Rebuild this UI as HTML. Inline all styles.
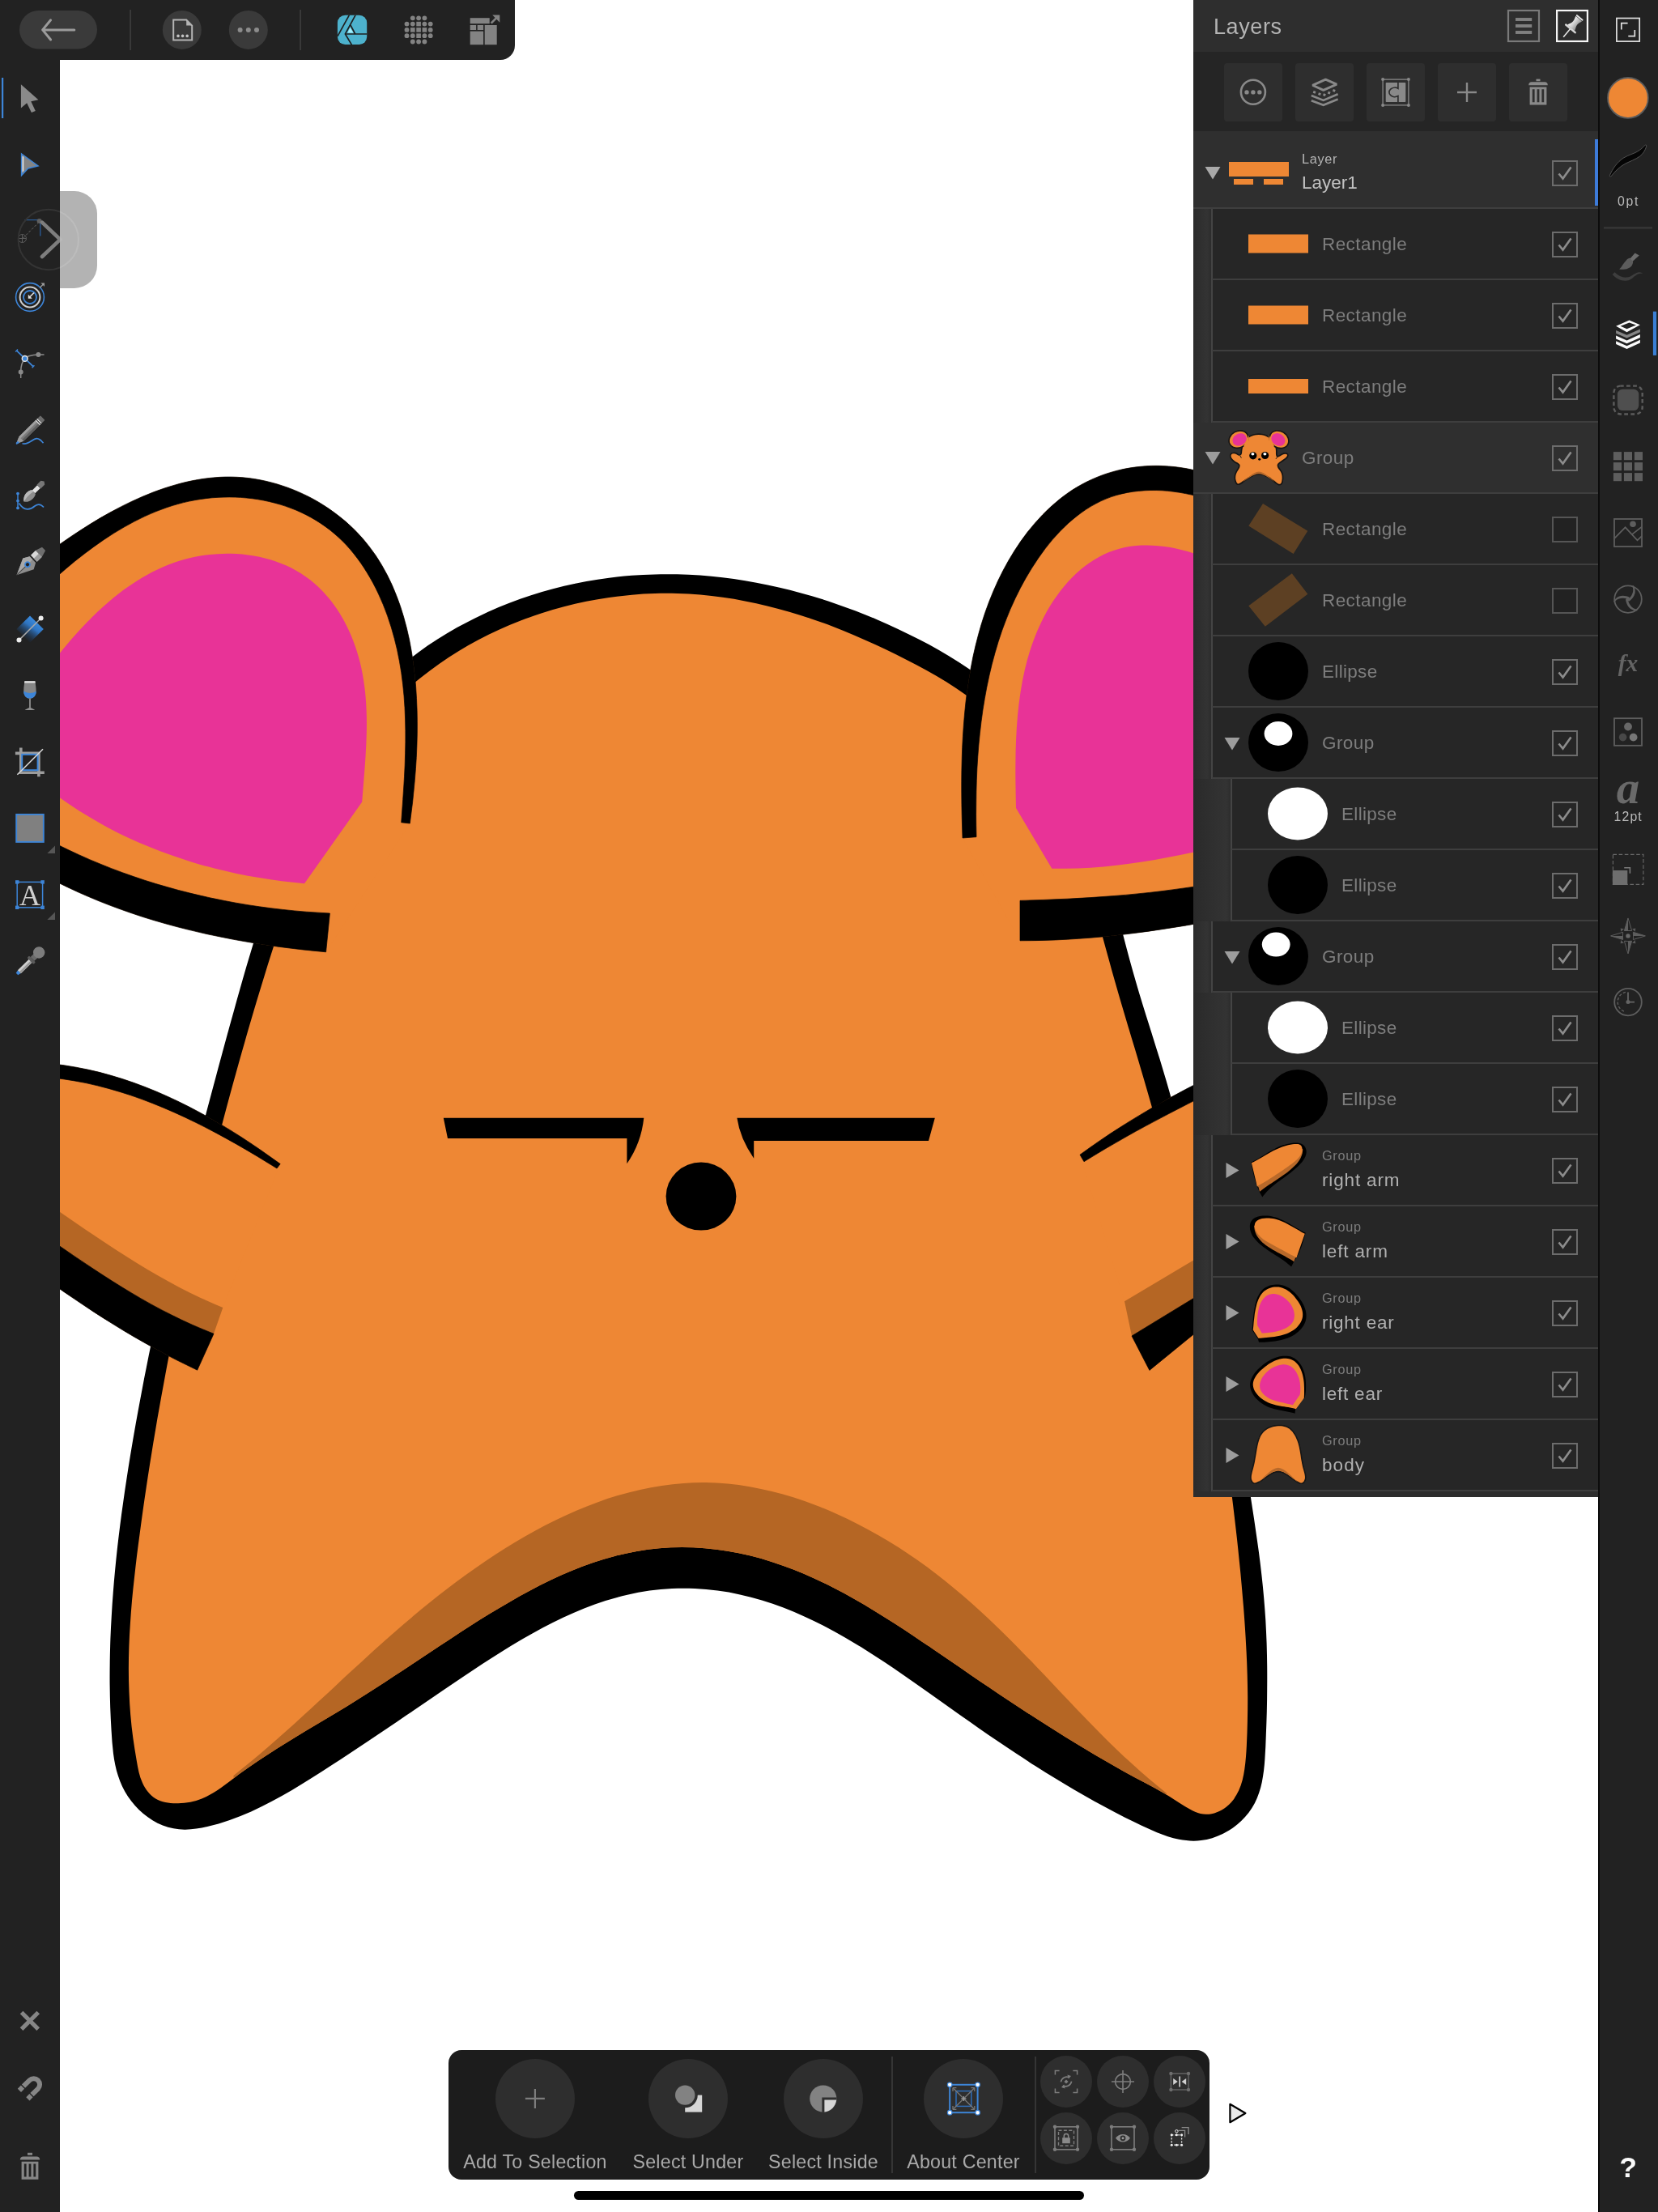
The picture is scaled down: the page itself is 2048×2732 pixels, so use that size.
<!DOCTYPE html><html><head><meta charset="utf-8"><title>Layers</title><style>
html,body{margin:0;padding:0}
body{width:2048px;height:2732px;position:relative;overflow:hidden;background:#fff;font-family:"Liberation Sans",sans-serif}
.abs{position:absolute}
svg{display:block}
.name,.sub,.blabel,.ttl,svg.txt{will-change:transform}
#topbar{left:0;top:0;width:636px;height:74px;background:#222;border-bottom-right-radius:18px}
#leftbar{left:0;top:0;width:74px;height:2732px;background:#222}
#tab{left:74px;top:236px;width:46px;height:120px;background:#b3b3b3;border-radius:0 28px 28px 0}
#rightbar{left:1974px;top:0;width:74px;height:2732px;background:#222}
#layers{left:1474px;top:0;width:500px;height:1849px;background:#2e2e2e;overflow:hidden}
#lhead{left:0;top:0;width:500px;height:64px;background:#2e2e2e}
#ltools{left:0;top:64px;width:500px;height:98px;background:#252525}
.lbtn{top:14px;width:72px;height:72px;background:#2e2e2e;border-radius:4px}
.row{left:0;width:500px;height:88px}
.sep{height:2px;background:#3e3e3e}
.cb{left:443px;width:28px;height:28px;border:2px solid #6c6c6c}
.name{font-size:22.5px;color:#7d7d7d;white-space:nowrap;letter-spacing:0.4px}
.sub{font-size:16.3px;color:#7d7d7d;white-space:nowrap;letter-spacing:0.7px}
#bottombar{left:554px;top:2532px;width:940px;height:160px;background:#1c1c1c;border-radius:16px}
.bigc{width:98px;height:98px;border-radius:49px;background:#2e2e2e;top:11px}
.smc{width:64px;height:64px;border-radius:32px;background:#2e2e2e}
.blabel{top:124.5px;font-size:23.2px;color:#a9a9a9;white-space:nowrap;text-align:center;width:240px;letter-spacing:0.24px}
#homeind{left:709px;top:2705.5px;width:630px;height:11.5px;border-radius:6px;background:#000}
</style></head><body>
<svg id="art" width="2048" height="2732" viewBox="0 0 2048 2732" style="position:absolute;left:0;top:0">
<defs><clipPath id="bodyclip"><path d="M837,733C846.3,733.2 855.7,733.8 865,734.6C874.3,735.4 883.6,736.4 892.8,737.8C902.1,739.1 911.3,740.6 920.4,742.4C929.6,744.2 938.7,746.2 947.8,748.4C956.9,750.7 966,753.1 975,755.7C984,758.4 993,761.2 1001.9,764.2C1010.9,767.2 1019.7,770.4 1028.6,773.8C1037.4,777.2 1046.2,780.7 1054.9,784.4C1063.7,788.1 1072.3,791.9 1081,795.9C1089.6,799.9 1098.2,804 1106.7,808.2C1115.2,812.4 1123.7,816.7 1132.1,821.2C1140.5,825.7 1148.8,830.3 1157,835.1C1165.1,839.8 1173.1,844.8 1181,850C1188.8,855.2 1196.5,860.6 1203.9,866.3C1211.3,871.9 1218.5,877.8 1225.4,884.1C1232.3,890.3 1238.9,896.8 1245.2,903.6C1251.5,910.5 1257.5,917.7 1263.1,925.1C1268.8,932.5 1274.2,940.2 1279.3,948C1284.4,955.9 1289.2,964 1293.8,972.3C1298.4,980.6 1302.7,989 1306.8,997.5C1310.9,1006 1314.8,1014.7 1318.4,1023.4C1322.1,1032.1 1325.5,1040.9 1328.8,1049.8C1332.1,1058.6 1335.2,1067.6 1338.1,1076.5C1341.1,1085.5 1343.9,1094.5 1346.7,1103.5C1349.4,1112.5 1352,1121.6 1354.6,1130.7C1357.2,1139.8 1359.7,1148.9 1362.2,1158C1364.7,1167.1 1367.2,1176.2 1369.7,1185.2C1372.2,1194.3 1374.7,1203.4 1377.3,1212.4C1379.8,1221.5 1382.5,1230.5 1385.1,1239.5C1387.8,1248.4 1390.4,1257.4 1393.1,1266.4C1395.8,1275.4 1398.5,1284.3 1401.2,1293.3C1403.9,1302.3 1406.6,1311.2 1409.2,1320.2C1411.9,1329.2 1414.5,1338.2 1417.1,1347.2C1419.7,1356.2 1422.3,1365.3 1424.8,1374.3C1427.3,1383.4 1429.8,1392.5 1432.2,1401.6C1434.7,1410.7 1437.1,1419.8 1439.5,1428.9C1441.9,1438 1444.3,1447.1 1446.6,1456.3C1448.9,1465.4 1451.2,1474.6 1453.4,1483.8C1455.7,1492.9 1457.9,1502.1 1460.1,1511.3C1462.2,1520.5 1464.4,1529.7 1466.5,1539C1468.6,1548.2 1470.6,1557.4 1472.7,1566.6C1474.7,1575.9 1476.7,1585.1 1478.6,1594.4C1480.6,1603.6 1482.5,1612.9 1484.3,1622.2C1486.2,1631.4 1488,1640.7 1489.8,1650C1491.6,1659.3 1493.4,1668.6 1495.1,1677.9C1496.8,1687.1 1498.5,1696.4 1500.1,1705.7C1501.7,1715 1503.3,1724.3 1504.9,1733.7C1506.4,1743 1507.9,1752.3 1509.4,1761.6C1510.8,1770.9 1512.2,1780.2 1513.6,1789.5C1515,1798.8 1516.3,1808.1 1517.6,1817.4C1518.9,1826.7 1520.1,1836 1521.4,1845.3C1522.6,1854.6 1523.7,1863.9 1524.8,1873.2C1525.9,1882.5 1527,1891.8 1528,1901.1C1529,1910.4 1530,1919.7 1530.9,1929C1531.9,1938.2 1532.8,1947.5 1533.6,1956.8C1534.4,1966 1535.2,1975.3 1536,1984.6C1536.7,1993.8 1537.4,2003.1 1538,2012.3C1538.6,2021.6 1539.1,2030.9 1539.6,2040.3C1540.1,2049.6 1540.4,2059 1540.7,2068.4C1541,2077.9 1541.1,2087.4 1541.2,2096.9C1541.2,2106.5 1541.1,2116.2 1540.9,2125.8C1540.7,2135.7 1540.4,2145.6 1539.9,2155.4C1539.4,2165.3 1538.8,2175.1 1537.3,2184.9C1536,2194.1 1533.9,2203.2 1530.1,2211.6C1526.6,2219.3 1521.5,2226.3 1514.7,2231.7C1507.5,2237.3 1498.4,2241 1489.6,2240.8C1480.5,2240.5 1471.7,2235.8 1463.6,2230.9C1455,2225.7 1447,2220.2 1438.6,2215.2C1430.5,2210.4 1422,2206 1413.6,2201.6C1405.3,2197.2 1397,2192.7 1388.8,2188.2C1380.6,2183.6 1372.5,2179 1364.4,2174.3C1356.3,2169.7 1348.2,2164.9 1340.2,2160.1C1332.2,2155.3 1324.2,2150.4 1316.3,2145.5C1308.4,2140.6 1300.5,2135.6 1292.6,2130.6C1284.7,2125.6 1276.8,2120.5 1269,2115.4C1261.2,2110.3 1253.3,2105.1 1245.5,2099.9C1237.7,2094.7 1229.9,2089.5 1222.1,2084.2C1214.3,2079 1206.5,2073.7 1198.7,2068.4C1190.9,2063 1183,2057.7 1175.2,2052.3C1167.4,2047 1159.5,2041.6 1151.7,2036.2C1143.8,2030.8 1135.9,2025.5 1128,2020.2C1120,2014.9 1112.1,2009.7 1104,2004.5C1096,1999.4 1088,1994.3 1079.9,1989.4C1071.8,1984.4 1063.6,1979.6 1055.4,1975C1047.2,1970.3 1038.9,1965.8 1030.5,1961.5C1022.2,1957.2 1013.7,1953.1 1005.2,1949.2C996.7,1945.3 988.1,1941.6 979.4,1938.2C970.8,1934.8 962,1931.7 953.1,1928.9C944.3,1926 935.3,1923.5 926.2,1921.3C917.1,1919.1 908,1917.2 898.7,1915.7C889.4,1914.2 880.1,1913 870.7,1912.2C861.3,1911.5 851.9,1911.1 842.4,1911.1C833,1911.1 823.6,1911.5 814.3,1912.3C805,1913.1 795.7,1914.3 786.5,1916C777.4,1917.6 768.3,1919.6 759.3,1922C750.3,1924.4 741.3,1927.1 732.5,1930.1C723.6,1933.2 714.8,1936.5 706.1,1940.1C697.4,1943.7 688.8,1947.6 680.2,1951.6C671.6,1955.7 663.2,1960 654.7,1964.5C646.3,1968.9 637.9,1973.6 629.7,1978.4C621.4,1983.1 613.1,1988.1 605,1993.1C596.8,1998.1 588.7,2003.2 580.7,2008.3C572.6,2013.5 564.7,2018.6 556.7,2023.9C548.8,2029 541,2034.2 533.1,2039.5C525.3,2044.6 517.5,2049.8 509.8,2054.9C502,2060 494.3,2065.2 486.5,2070.2C478.8,2075.3 471,2080.4 463.2,2085.4C455.4,2090.4 447.5,2095.4 439.6,2100.4C431.7,2105.4 423.7,2110.3 415.6,2115.2C407.5,2120.1 399.4,2125 391.2,2129.8C383.1,2134.7 374.9,2139.6 366.7,2144.6C358.6,2149.5 350.5,2154.5 342.4,2159.6C334.4,2164.6 326.5,2169.8 318.6,2175C310.8,2180.2 303.1,2185.6 295.6,2191.1C288.2,2196.7 281,2202.4 273.4,2207.8C265.8,2213.1 257.9,2218.1 249.3,2221.5C240.2,2225.2 230.3,2227 220.1,2227.3C210.4,2227.6 200.3,2226.4 192.2,2221.6C185.1,2217.2 179.5,2209.9 176,2202.1C172,2193.4 170.4,2184 168.8,2174.7C167.2,2165.2 165.6,2155.8 164.3,2146.3C163,2136.9 162,2127.4 161.2,2117.9C160.4,2108.5 159.8,2099.1 159.5,2089.6C159.1,2080.2 158.9,2070.8 158.9,2061.4C158.9,2052 159.1,2042.6 159.4,2033.2C159.8,2023.9 160.2,2014.5 160.9,2005.1C161.5,1995.7 162.2,1986.4 163,1977C163.9,1967.6 164.8,1958.3 165.9,1948.9C166.9,1939.6 168,1930.2 169.1,1920.9C170.3,1911.6 171.5,1902.2 172.8,1892.9C174,1883.6 175.3,1874.2 176.6,1864.9C177.9,1855.6 179.3,1846.3 180.7,1836.9C182.1,1827.6 183.5,1818.3 185,1809C186.5,1799.7 188,1790.4 189.5,1781.1C191.1,1771.8 192.6,1762.5 194.2,1753.2C195.9,1743.9 197.5,1734.6 199.2,1725.3C200.9,1716.1 202.6,1706.8 204.3,1697.5C206,1688.3 207.8,1679 209.6,1669.8C211.4,1660.5 213.3,1651.2 215.2,1642C217,1632.8 218.9,1623.5 220.9,1614.3C222.8,1605.1 224.8,1595.9 226.8,1586.7C228.8,1577.4 230.8,1568.2 232.8,1559C234.9,1549.8 237,1540.7 239.1,1531.5C241.2,1522.3 243.3,1513.1 245.5,1504C247.7,1494.8 249.9,1485.7 252.1,1476.5C254.3,1467.4 256.6,1458.2 258.8,1449.1C261.1,1440 263.4,1430.9 265.8,1421.8C268.1,1412.7 270.4,1403.6 272.8,1394.5C275.2,1385.4 277.6,1376.3 280,1367.3C282.5,1358.2 284.9,1349.1 287.4,1340.1C289.9,1331.1 292.4,1322 294.9,1313C297.4,1304 300,1295 302.6,1286C305.1,1277 307.7,1268 310.4,1259C313,1250 315.7,1241.1 318.4,1232.1C321.1,1223.1 323.8,1214.2 326.6,1205.2C329.3,1196.2 332.1,1187.3 335,1178.3C337.8,1169.4 340.7,1160.4 343.6,1151.5C346.5,1142.5 349.5,1133.6 352.5,1124.6C355.5,1115.6 358.6,1106.7 361.7,1097.7C364.8,1088.8 367.9,1079.8 371.1,1070.8C374.4,1061.8 377.6,1052.9 381,1043.9C384.3,1035 387.8,1026.1 391.4,1017.2C394.9,1008.4 398.7,999.7 402.6,991C406.5,982.4 410.6,973.8 414.9,965.4C419.2,957.1 423.7,948.8 428.5,940.8C433.3,932.7 438.4,924.9 443.8,917.3C449.1,909.7 454.8,902.3 460.7,895.1C466.6,887.9 472.8,880.9 479.2,874.2C485.6,867.4 492.3,860.9 499.1,854.6C506,848.4 513.1,842.3 520.4,836.5C527.7,830.6 535.2,825 542.8,819.7C550.5,814.3 558.4,809.2 566.4,804.3C574.4,799.4 582.6,794.7 590.9,790.3C599.3,785.9 607.8,781.7 616.4,777.8C625,773.9 633.7,770.2 642.5,766.8C651.4,763.4 660.3,760.2 669.3,757.3C678.3,754.4 687.5,751.7 696.6,749.3C705.8,746.9 715.1,744.7 724.3,742.8C733.6,741 743,739.3 752.4,738C761.7,736.6 771.1,735.5 780.5,734.7C789.9,733.8 799.3,733.3 808.8,733C818.2,732.7 827.6,732.7 837,733Z"/></clipPath></defs>
<path d="M836.5,709.3C845.8,709.5 855.2,709.9 864.6,710.6C873.9,711.3 883.3,712.2 892.6,713.3C901.9,714.4 911.2,715.7 920.5,717.2C929.8,718.7 939,720.4 948.2,722.4C957.4,724.3 966.6,726.4 975.8,728.7C984.9,731.1 994,733.6 1003.1,736.3C1012.2,738.9 1021.2,741.8 1030.2,744.9C1039.1,747.9 1048,751.2 1056.9,754.5C1065.8,757.9 1074.6,761.5 1083.3,765.2C1092,769 1100.7,772.8 1109.3,776.9C1117.9,780.9 1126.5,785.1 1134.9,789.5C1143.3,793.8 1151.7,798.3 1159.9,803C1168.1,807.7 1176.2,812.6 1184.2,817.7C1192.1,822.8 1199.9,828.1 1207.5,833.6C1215,839.1 1222.4,844.9 1229.6,850.9C1236.8,856.9 1243.7,863.1 1250.4,869.6C1257.1,876.1 1263.6,882.9 1269.8,889.8C1276,896.8 1281.9,904.1 1287.6,911.5C1293.3,918.9 1298.7,926.6 1303.9,934.4C1309,942.2 1313.9,950.2 1318.6,958.4C1323.2,966.6 1327.5,974.9 1331.6,983.3C1335.7,991.8 1339.5,1000.4 1343.1,1009C1346.6,1017.7 1350,1026.5 1353.1,1035.4C1356.2,1044.3 1359.2,1053.2 1362,1062.2C1364.8,1071.3 1367.4,1080.4 1370,1089.5C1372.6,1098.6 1375,1107.8 1377.4,1117C1379.9,1126.1 1382.2,1135.3 1384.6,1144.6C1387,1153.7 1389.4,1162.9 1391.8,1172.1C1394.2,1181.3 1396.7,1190.4 1399.3,1199.6C1401.8,1208.7 1404.5,1217.7 1407.2,1226.8C1409.9,1235.8 1412.7,1244.8 1415.5,1253.8C1418.3,1262.7 1421.2,1271.7 1424,1280.7C1426.8,1289.6 1429.6,1298.6 1432.4,1307.6C1435.1,1316.6 1437.8,1325.6 1440.5,1334.6C1443.1,1343.6 1445.7,1352.6 1448.2,1361.7C1450.8,1370.7 1453.2,1379.8 1455.7,1388.9C1458.1,1398 1460.4,1407.1 1462.8,1416.2C1465.1,1425.3 1467.3,1434.5 1469.5,1443.6C1471.8,1452.8 1473.9,1462 1476.1,1471.1C1478.2,1480.3 1480.3,1489.5 1482.3,1498.7C1484.3,1507.9 1486.3,1517.1 1488.3,1526.4C1490.2,1535.6 1492.2,1544.8 1494,1554.1C1495.9,1563.3 1497.8,1572.6 1499.6,1581.9C1501.4,1591.1 1503.2,1600.4 1504.9,1609.7C1506.7,1619 1508.4,1628.3 1510.1,1637.6C1511.8,1646.9 1513.4,1656.2 1515.1,1665.5C1516.7,1674.8 1518.3,1684.1 1519.9,1693.4C1521.5,1702.8 1523.1,1712.1 1524.6,1721.4C1526.2,1730.8 1527.7,1740.1 1529.2,1749.4C1530.7,1758.8 1532.2,1768.1 1533.7,1777.4C1535.2,1786.8 1536.7,1796.1 1538.1,1805.5C1539.6,1814.8 1541.1,1824.2 1542.5,1833.5C1544,1842.8 1545.4,1852.2 1546.8,1861.5C1548.3,1870.8 1549.7,1880.2 1551,1889.5C1552.4,1898.8 1553.7,1908.2 1555,1917.5C1556.2,1926.8 1557.4,1936.1 1558.4,1945.5C1559.5,1954.8 1560.4,1964.1 1561.2,1973.4C1562,1982.7 1562.7,1992 1563.3,2001.3C1563.8,2010.7 1564.2,2020 1564.6,2029.3C1564.9,2038.7 1565.1,2048 1565.2,2057.4C1565.3,2066.8 1565.3,2076.3 1565.2,2085.7C1565.2,2095.2 1565,2104.7 1564.8,2114.2C1564.5,2123.9 1564.2,2133.5 1563.8,2143.1C1563.5,2152.9 1563.1,2162.6 1562.4,2172.3C1561.8,2181.9 1560.7,2191.5 1558.8,2200.9C1556.9,2209.9 1554.1,2218.8 1549.9,2227C1545.6,2235.2 1539.9,2242.7 1533.2,2249C1526.5,2255.5 1518.7,2260.9 1510.3,2265C1501.9,2269.1 1492.9,2272 1483.7,2273.1C1474.6,2274.2 1465.3,2273.6 1456.3,2271.8C1447,2269.9 1438,2266.8 1429.1,2263.2C1420.1,2259.5 1411.3,2255.2 1402.5,2251C1393.8,2246.7 1385.2,2242.4 1376.6,2237.9C1368.2,2233.5 1359.8,2229 1351.4,2224.4C1343.2,2219.8 1335,2215.2 1326.9,2210.4C1318.8,2205.7 1310.7,2200.9 1302.8,2196.1C1294.8,2191.2 1286.9,2186.3 1279.1,2181.3C1271.2,2176.3 1263.4,2171.2 1255.7,2166.1C1247.9,2161 1240.2,2155.8 1232.5,2150.6C1224.8,2145.3 1217.1,2140 1209.4,2134.7C1201.7,2129.3 1194,2123.9 1186.3,2118.5C1178.6,2113 1170.8,2107.5 1163.1,2102C1155.4,2096.5 1147.6,2090.9 1139.8,2085.4C1132,2079.9 1124.1,2074.4 1116.2,2068.9C1108.3,2063.5 1100.4,2058.1 1092.4,2052.8C1084.4,2047.5 1076.4,2042.3 1068.3,2037.2C1060.2,2032.2 1052,2027.2 1043.8,2022.5C1035.6,2017.7 1027.3,2013.2 1018.9,2008.8C1010.5,2004.5 1002.1,2000.3 993.5,1996.4C985,1992.5 976.3,1988.9 967.6,1985.6C958.9,1982.2 950,1979.2 941.1,1976.5C932.2,1973.8 923.1,1971.4 914,1969.4C904.9,1967.4 895.6,1965.8 886.3,1964.6C877,1963.4 867.6,1962.5 858.2,1962.1C848.9,1961.7 839.5,1961.7 830.1,1962.1C820.8,1962.5 811.5,1963.3 802.3,1964.6C793.1,1965.9 783.9,1967.6 774.9,1969.7C765.8,1971.8 756.9,1974.3 748,1977.1C739.1,1980 730.3,1983.1 721.6,1986.6C712.9,1990.1 704.2,1993.8 695.7,1997.8C687.1,2001.8 678.6,2006.1 670.2,2010.5C661.7,2015 653.4,2019.7 645.1,2024.5C636.8,2029.3 628.6,2034.3 620.4,2039.4C612.2,2044.5 604.1,2049.7 596,2054.9C588,2060.2 580,2065.5 572,2070.9C564.1,2076.3 556.2,2081.6 548.3,2087C540.5,2092.4 532.7,2097.7 524.9,2103C517.1,2108.3 509.4,2113.6 501.6,2118.8C493.9,2124.1 486.2,2129.3 478.5,2134.5C470.8,2139.7 463.1,2144.9 455.4,2150C447.6,2155.2 439.9,2160.3 432.1,2165.4C424.3,2170.6 416.5,2175.7 408.7,2180.8C400.8,2185.9 392.8,2191 384.9,2196C376.9,2201.1 368.8,2206 360.6,2210.9C352.5,2215.7 344.2,2220.4 335.8,2224.8C327.4,2229.3 318.9,2233.5 310.2,2237.4C301.5,2241.3 292.6,2244.8 283.7,2248C274.6,2251.2 265.4,2253.9 256.1,2256.1C246.8,2258.2 237.4,2259.8 228,2259.7C218.8,2259.6 209.6,2257.9 201,2254.6C192.3,2251.2 184.2,2246.1 177,2240.1C169.7,2233.9 163.3,2226.7 158,2218.7C152.8,2210.9 148.8,2202.3 145.9,2193.3C143,2184.4 141.2,2175.2 140,2165.9C138.8,2156.5 138.1,2147 137.6,2137.6C137,2128.1 136.6,2118.6 136.2,2109.1C135.9,2099.7 135.7,2090.2 135.6,2080.8C135.5,2071.3 135.6,2061.9 135.7,2052.4C135.8,2043 136.1,2033.5 136.4,2024.1C136.8,2014.7 137.2,2005.3 137.8,1995.9C138.3,1986.4 139,1977 139.7,1967.6C140.4,1958.2 141.2,1948.9 142.1,1939.5C143,1930.1 144,1920.7 145,1911.3C146.1,1902 147.2,1892.6 148.4,1883.3C149.6,1873.9 150.8,1864.6 152.2,1855.2C153.5,1845.9 154.8,1836.6 156.3,1827.2C157.7,1817.9 159.2,1808.6 160.7,1799.3C162.2,1790 163.8,1780.7 165.4,1771.4C167,1762.1 168.7,1752.8 170.4,1743.5C172.1,1734.3 173.8,1725 175.6,1715.7C177.3,1706.5 179.1,1697.2 181,1688C182.8,1678.7 184.7,1669.5 186.6,1660.3C188.5,1651 190.4,1641.8 192.4,1632.6C194.4,1623.4 196.4,1614.2 198.4,1605C200.4,1595.8 202.5,1586.6 204.6,1577.4C206.7,1568.2 208.8,1559 210.9,1549.8C213.1,1540.6 215.2,1531.4 217.4,1522.3C219.6,1513.1 221.8,1503.9 224.1,1494.8C226.3,1485.6 228.6,1476.5 230.9,1467.3C233.2,1458.2 235.5,1449 237.8,1439.9C240.1,1430.7 242.5,1421.6 244.8,1412.5C247.2,1403.3 249.6,1394.2 252,1385.1C254.3,1376 256.8,1366.9 259.2,1357.7C261.6,1348.6 264,1339.5 266.5,1330.4C268.9,1321.3 271.4,1312.2 273.9,1303.1C276.3,1294 278.8,1284.9 281.3,1275.8C283.8,1266.7 286.3,1257.6 288.9,1248.5C291.4,1239.4 293.9,1230.3 296.5,1221.3C299.1,1212.2 301.7,1203.1 304.3,1194.1C307,1185 309.7,1176 312.4,1166.9C315.1,1157.9 317.8,1148.9 320.6,1139.9C323.4,1130.9 326.3,1121.9 329.2,1112.9C332.1,1103.9 335,1094.9 338.1,1086C341.1,1077 344.1,1068.1 347.3,1059.1C350.4,1050.2 353.6,1041.3 356.9,1032.4C360.2,1023.6 363.6,1014.7 367.1,1006C370.6,997.2 374.2,988.5 378.1,979.9C381.9,971.3 385.9,962.8 390.1,954.4C394.3,946.1 398.7,937.9 403.4,929.8C408.1,921.7 413,913.8 418.2,906.1C423.4,898.4 429,890.8 434.8,883.5C440.6,876.2 446.7,869.1 453,862.2C459.4,855.3 466,848.6 472.8,842.1C479.7,835.6 486.7,829.4 494,823.3C501.3,817.3 508.8,811.5 516.4,805.9C524.1,800.3 532,794.9 540,789.8C548,784.7 556.2,779.8 564.5,775.1C572.9,770.5 581.3,766.1 589.9,761.9C598.5,757.7 607.1,753.8 615.9,750.1C624.7,746.4 633.5,743 642.5,739.8C651.4,736.7 660.4,733.8 669.5,731.1C678.5,728.4 687.6,726 696.8,723.8C705.9,721.7 715.2,719.7 724.4,718C733.7,716.4 742.9,714.9 752.3,713.7C761.6,712.5 770.9,711.5 780.3,710.8C789.6,710.1 799,709.6 808.4,709.4C817.7,709.1 827.1,709.1 836.5,709.3Z" fill="#000"/>
<path d="M837,733C846.3,733.2 855.7,733.8 865,734.6C874.3,735.4 883.6,736.4 892.8,737.8C902.1,739.1 911.3,740.6 920.4,742.4C929.6,744.2 938.7,746.2 947.8,748.4C956.9,750.7 966,753.1 975,755.7C984,758.4 993,761.2 1001.9,764.2C1010.9,767.2 1019.7,770.4 1028.6,773.8C1037.4,777.2 1046.2,780.7 1054.9,784.4C1063.7,788.1 1072.3,791.9 1081,795.9C1089.6,799.9 1098.2,804 1106.7,808.2C1115.2,812.4 1123.7,816.7 1132.1,821.2C1140.5,825.7 1148.8,830.3 1157,835.1C1165.1,839.8 1173.1,844.8 1181,850C1188.8,855.2 1196.5,860.6 1203.9,866.3C1211.3,871.9 1218.5,877.8 1225.4,884.1C1232.3,890.3 1238.9,896.8 1245.2,903.6C1251.5,910.5 1257.5,917.7 1263.1,925.1C1268.8,932.5 1274.2,940.2 1279.3,948C1284.4,955.9 1289.2,964 1293.8,972.3C1298.4,980.6 1302.7,989 1306.8,997.5C1310.9,1006 1314.8,1014.7 1318.4,1023.4C1322.1,1032.1 1325.5,1040.9 1328.8,1049.8C1332.1,1058.6 1335.2,1067.6 1338.1,1076.5C1341.1,1085.5 1343.9,1094.5 1346.7,1103.5C1349.4,1112.5 1352,1121.6 1354.6,1130.7C1357.2,1139.8 1359.7,1148.9 1362.2,1158C1364.7,1167.1 1367.2,1176.2 1369.7,1185.2C1372.2,1194.3 1374.7,1203.4 1377.3,1212.4C1379.8,1221.5 1382.5,1230.5 1385.1,1239.5C1387.8,1248.4 1390.4,1257.4 1393.1,1266.4C1395.8,1275.4 1398.5,1284.3 1401.2,1293.3C1403.9,1302.3 1406.6,1311.2 1409.2,1320.2C1411.9,1329.2 1414.5,1338.2 1417.1,1347.2C1419.7,1356.2 1422.3,1365.3 1424.8,1374.3C1427.3,1383.4 1429.8,1392.5 1432.2,1401.6C1434.7,1410.7 1437.1,1419.8 1439.5,1428.9C1441.9,1438 1444.3,1447.1 1446.6,1456.3C1448.9,1465.4 1451.2,1474.6 1453.4,1483.8C1455.7,1492.9 1457.9,1502.1 1460.1,1511.3C1462.2,1520.5 1464.4,1529.7 1466.5,1539C1468.6,1548.2 1470.6,1557.4 1472.7,1566.6C1474.7,1575.9 1476.7,1585.1 1478.6,1594.4C1480.6,1603.6 1482.5,1612.9 1484.3,1622.2C1486.2,1631.4 1488,1640.7 1489.8,1650C1491.6,1659.3 1493.4,1668.6 1495.1,1677.9C1496.8,1687.1 1498.5,1696.4 1500.1,1705.7C1501.7,1715 1503.3,1724.3 1504.9,1733.7C1506.4,1743 1507.9,1752.3 1509.4,1761.6C1510.8,1770.9 1512.2,1780.2 1513.6,1789.5C1515,1798.8 1516.3,1808.1 1517.6,1817.4C1518.9,1826.7 1520.1,1836 1521.4,1845.3C1522.6,1854.6 1523.7,1863.9 1524.8,1873.2C1525.9,1882.5 1527,1891.8 1528,1901.1C1529,1910.4 1530,1919.7 1530.9,1929C1531.9,1938.2 1532.8,1947.5 1533.6,1956.8C1534.4,1966 1535.2,1975.3 1536,1984.6C1536.7,1993.8 1537.4,2003.1 1538,2012.3C1538.6,2021.6 1539.1,2030.9 1539.6,2040.3C1540.1,2049.6 1540.4,2059 1540.7,2068.4C1541,2077.9 1541.1,2087.4 1541.2,2096.9C1541.2,2106.5 1541.1,2116.2 1540.9,2125.8C1540.7,2135.7 1540.4,2145.6 1539.9,2155.4C1539.4,2165.3 1538.8,2175.1 1537.3,2184.9C1536,2194.1 1533.9,2203.2 1530.1,2211.6C1526.6,2219.3 1521.5,2226.3 1514.7,2231.7C1507.5,2237.3 1498.4,2241 1489.6,2240.8C1480.5,2240.5 1471.7,2235.8 1463.6,2230.9C1455,2225.7 1447,2220.2 1438.6,2215.2C1430.5,2210.4 1422,2206 1413.6,2201.6C1405.3,2197.2 1397,2192.7 1388.8,2188.2C1380.6,2183.6 1372.5,2179 1364.4,2174.3C1356.3,2169.7 1348.2,2164.9 1340.2,2160.1C1332.2,2155.3 1324.2,2150.4 1316.3,2145.5C1308.4,2140.6 1300.5,2135.6 1292.6,2130.6C1284.7,2125.6 1276.8,2120.5 1269,2115.4C1261.2,2110.3 1253.3,2105.1 1245.5,2099.9C1237.7,2094.7 1229.9,2089.5 1222.1,2084.2C1214.3,2079 1206.5,2073.7 1198.7,2068.4C1190.9,2063 1183,2057.7 1175.2,2052.3C1167.4,2047 1159.5,2041.6 1151.7,2036.2C1143.8,2030.8 1135.9,2025.5 1128,2020.2C1120,2014.9 1112.1,2009.7 1104,2004.5C1096,1999.4 1088,1994.3 1079.9,1989.4C1071.8,1984.4 1063.6,1979.6 1055.4,1975C1047.2,1970.3 1038.9,1965.8 1030.5,1961.5C1022.2,1957.2 1013.7,1953.1 1005.2,1949.2C996.7,1945.3 988.1,1941.6 979.4,1938.2C970.8,1934.8 962,1931.7 953.1,1928.9C944.3,1926 935.3,1923.5 926.2,1921.3C917.1,1919.1 908,1917.2 898.7,1915.7C889.4,1914.2 880.1,1913 870.7,1912.2C861.3,1911.5 851.9,1911.1 842.4,1911.1C833,1911.1 823.6,1911.5 814.3,1912.3C805,1913.1 795.7,1914.3 786.5,1916C777.4,1917.6 768.3,1919.6 759.3,1922C750.3,1924.4 741.3,1927.1 732.5,1930.1C723.6,1933.2 714.8,1936.5 706.1,1940.1C697.4,1943.7 688.8,1947.6 680.2,1951.6C671.6,1955.7 663.2,1960 654.7,1964.5C646.3,1968.9 637.9,1973.6 629.7,1978.4C621.4,1983.1 613.1,1988.1 605,1993.1C596.8,1998.1 588.7,2003.2 580.7,2008.3C572.6,2013.5 564.7,2018.6 556.7,2023.9C548.8,2029 541,2034.2 533.1,2039.5C525.3,2044.6 517.5,2049.8 509.8,2054.9C502,2060 494.3,2065.2 486.5,2070.2C478.8,2075.3 471,2080.4 463.2,2085.4C455.4,2090.4 447.5,2095.4 439.6,2100.4C431.7,2105.4 423.7,2110.3 415.6,2115.2C407.5,2120.1 399.4,2125 391.2,2129.8C383.1,2134.7 374.9,2139.6 366.7,2144.6C358.6,2149.5 350.5,2154.5 342.4,2159.6C334.4,2164.6 326.5,2169.8 318.6,2175C310.8,2180.2 303.1,2185.6 295.6,2191.1C288.2,2196.7 281,2202.4 273.4,2207.8C265.8,2213.1 257.9,2218.1 249.3,2221.5C240.2,2225.2 230.3,2227 220.1,2227.3C210.4,2227.6 200.3,2226.4 192.2,2221.6C185.1,2217.2 179.5,2209.9 176,2202.1C172,2193.4 170.4,2184 168.8,2174.7C167.2,2165.2 165.6,2155.8 164.3,2146.3C163,2136.9 162,2127.4 161.2,2117.9C160.4,2108.5 159.8,2099.1 159.5,2089.6C159.1,2080.2 158.9,2070.8 158.9,2061.4C158.9,2052 159.1,2042.6 159.4,2033.2C159.8,2023.9 160.2,2014.5 160.9,2005.1C161.5,1995.7 162.2,1986.4 163,1977C163.9,1967.6 164.8,1958.3 165.9,1948.9C166.9,1939.6 168,1930.2 169.1,1920.9C170.3,1911.6 171.5,1902.2 172.8,1892.9C174,1883.6 175.3,1874.2 176.6,1864.9C177.9,1855.6 179.3,1846.3 180.7,1836.9C182.1,1827.6 183.5,1818.3 185,1809C186.5,1799.7 188,1790.4 189.5,1781.1C191.1,1771.8 192.6,1762.5 194.2,1753.2C195.9,1743.9 197.5,1734.6 199.2,1725.3C200.9,1716.1 202.6,1706.8 204.3,1697.5C206,1688.3 207.8,1679 209.6,1669.8C211.4,1660.5 213.3,1651.2 215.2,1642C217,1632.8 218.9,1623.5 220.9,1614.3C222.8,1605.1 224.8,1595.9 226.8,1586.7C228.8,1577.4 230.8,1568.2 232.8,1559C234.9,1549.8 237,1540.7 239.1,1531.5C241.2,1522.3 243.3,1513.1 245.5,1504C247.7,1494.8 249.9,1485.7 252.1,1476.5C254.3,1467.4 256.6,1458.2 258.8,1449.1C261.1,1440 263.4,1430.9 265.8,1421.8C268.1,1412.7 270.4,1403.6 272.8,1394.5C275.2,1385.4 277.6,1376.3 280,1367.3C282.5,1358.2 284.9,1349.1 287.4,1340.1C289.9,1331.1 292.4,1322 294.9,1313C297.4,1304 300,1295 302.6,1286C305.1,1277 307.7,1268 310.4,1259C313,1250 315.7,1241.1 318.4,1232.1C321.1,1223.1 323.8,1214.2 326.6,1205.2C329.3,1196.2 332.1,1187.3 335,1178.3C337.8,1169.4 340.7,1160.4 343.6,1151.5C346.5,1142.5 349.5,1133.6 352.5,1124.6C355.5,1115.6 358.6,1106.7 361.7,1097.7C364.8,1088.8 367.9,1079.8 371.1,1070.8C374.4,1061.8 377.6,1052.9 381,1043.9C384.3,1035 387.8,1026.1 391.4,1017.2C394.9,1008.4 398.7,999.7 402.6,991C406.5,982.4 410.6,973.8 414.9,965.4C419.2,957.1 423.7,948.8 428.5,940.8C433.3,932.7 438.4,924.9 443.8,917.3C449.1,909.7 454.8,902.3 460.7,895.1C466.6,887.9 472.8,880.9 479.2,874.2C485.6,867.4 492.3,860.9 499.1,854.6C506,848.4 513.1,842.3 520.4,836.5C527.7,830.6 535.2,825 542.8,819.7C550.5,814.3 558.4,809.2 566.4,804.3C574.4,799.4 582.6,794.7 590.9,790.3C599.3,785.9 607.8,781.7 616.4,777.8C625,773.9 633.7,770.2 642.5,766.8C651.4,763.4 660.3,760.2 669.3,757.3C678.3,754.4 687.5,751.7 696.6,749.3C705.8,746.9 715.1,744.7 724.3,742.8C733.6,741 743,739.3 752.4,738C761.7,736.6 771.1,735.5 780.5,734.7C789.9,733.8 799.3,733.3 808.8,733C818.2,732.7 827.6,732.7 837,733Z" fill="#EE8734"/>
<path d="M288.5,2193.1C295.9,2187.1 303.3,2181.2 310.7,2175.1C317.9,2169.1 325.1,2163 332.2,2156.8C339.3,2150.7 346.3,2144.5 353.2,2138.3C360.2,2132.1 367.1,2125.9 373.9,2119.6C380.7,2113.4 387.5,2107.1 394.3,2100.8C401.1,2094.5 407.9,2088.2 414.7,2081.9C421.5,2075.6 428.2,2069.3 435,2063.1C441.8,2056.8 448.7,2050.5 455.5,2044.2C462.4,2037.9 469.4,2031.7 476.3,2025.5C483.4,2019.3 490.4,2013.1 497.5,2007C504.7,2000.8 512,1994.7 519.3,1988.6C526.7,1982.5 534.1,1976.5 541.7,1970.6C549.2,1964.7 556.8,1958.8 564.6,1953.1C572.3,1947.3 580.1,1941.7 588,1936.2C595.9,1930.7 603.9,1925.3 611.9,1920C620,1914.8 628.1,1909.7 636.3,1904.7C644.5,1899.8 652.8,1895.1 661.2,1890.5C669.5,1886 677.9,1881.6 686.4,1877.5C694.8,1873.3 703.4,1869.4 712,1865.7C720.6,1862.1 729.2,1858.6 738,1855.5C746.6,1852.3 755.4,1849.4 764.2,1846.8C773,1844.2 781.8,1841.9 790.7,1839.9C799.6,1837.9 808.5,1836.2 817.5,1834.9C826.4,1833.6 835.4,1832.6 844.5,1831.9C853.5,1831.3 862.6,1831 871.6,1831.1C880.7,1831.2 889.8,1831.7 898.9,1832.6C908,1833.5 917.2,1834.7 926.2,1836.3C935.4,1837.9 944.5,1839.8 953.5,1842C962.6,1844.2 971.6,1846.8 980.6,1849.6C989.6,1852.4 998.5,1855.6 1007.4,1859C1016.3,1862.4 1025.1,1866 1033.8,1870C1042.6,1873.9 1051.2,1878 1059.7,1882.4C1068.3,1886.8 1076.7,1891.4 1085.1,1896.2C1093.4,1901 1101.6,1906 1109.7,1911.1C1117.8,1916.3 1125.7,1921.6 1133.5,1927.1C1141.3,1932.6 1148.9,1938.2 1156.5,1944C1164,1949.8 1171.4,1955.7 1178.6,1961.7C1185.9,1967.7 1193,1973.8 1200,1980.1C1207.1,1986.3 1214,1992.6 1220.8,1999.1C1227.6,2005.5 1234.4,2012 1241,2018.5C1247.7,2025.1 1254.3,2031.7 1260.8,2038.4C1267.3,2045 1273.8,2051.7 1280.2,2058.5C1286.7,2065.2 1293.1,2072 1299.5,2078.7C1305.9,2085.5 1312.3,2092.3 1318.7,2099C1325.1,2105.8 1331.5,2112.5 1338,2119.2C1344.4,2125.9 1351,2132.6 1357.5,2139.2C1364.1,2145.9 1370.7,2152.4 1377.4,2158.9C1384.2,2165.4 1391,2171.8 1397.9,2178.1C1404.8,2184.5 1411.8,2190.7 1419,2196.8C1426.2,2202.9 1433.5,2208.9 1440.9,2214.8L1440.9,2300L288.5,2300Z" fill="#B56624" clip-path="url(#bodyclip)"/>
<path d="M402.6,1175.8C393,1174.9 383.5,1173.9 374,1172.9C364.4,1171.8 354.9,1170.7 345.3,1169.4C335.8,1168.1 326.3,1166.7 316.8,1165.2C307.3,1163.7 297.9,1162 288.4,1160.3C279,1158.5 269.6,1156.6 260.2,1154.6C250.8,1152.6 241.5,1150.4 232.1,1148.1C222.8,1145.8 213.6,1143.4 204.4,1140.8C195.1,1138.2 186,1135.5 176.8,1132.6C167.7,1129.6 158.7,1126.6 149.7,1123.3C140.7,1120.1 131.7,1116.7 122.8,1113.1C114,1109.5 105.1,1105.7 96.4,1101.8C87.7,1097.8 79,1093.7 70.5,1089.4C61.9,1085 53.3,1080.5 45,1075.8C36.5,1071 28.3,1066 20,1061L20,712C27.2,706.5 34.5,701 41.8,695.5C49.3,690 56.8,684.4 64.3,679C72,673.5 79.8,668 87.6,662.7C95.6,657.4 103.6,652.2 111.8,647.1C119.9,642.1 128.2,637.2 136.7,632.6C145.1,627.9 153.7,623.5 162.5,619.4C171.2,615.3 180.1,611.5 189.1,608C198,604.6 207.1,601.5 216.4,598.9C225.5,596.3 234.8,594.1 244.2,592.5C253.4,590.9 262.8,589.8 272.2,589.3C281.6,588.8 291,589 300.3,589.8C309.7,590.7 319,592.1 328.2,594.2C337.4,596.3 346.4,599 355.3,602.2C364.1,605.4 372.8,609.2 381.2,613.4C389.6,617.7 397.7,622.5 405.5,627.8C413.2,633 420.6,638.7 427.7,644.8C434.7,650.9 441.2,657.5 447.4,664.4C453.4,671.3 459,678.6 464.2,686.2C469.3,693.9 474,701.8 478.2,710C482.5,718.3 486.3,726.8 489.6,735.4C493.1,744.2 496.1,753.1 498.7,762.2C501.4,771.4 503.6,780.7 505.6,790C507.5,799.5 509.1,809.1 510.5,818.7C511.8,828.4 512.8,838.1 513.6,847.8C514.3,857.6 514.8,867.4 515.1,877.2C515.4,886.9 515.4,896.7 515.3,906.4C515.1,916.1 514.8,925.7 514.3,935.4C513.8,944.8 513.1,954.2 512.3,963.6C511.5,972.7 510.6,981.8 509.6,990.9C508.6,999.6 507.4,1008.3 506.3,1017Z" fill="#EE8734"/>
<path d="M402.6,1175.8C393,1174.9 383.5,1173.9 374,1172.9C364.4,1171.8 354.9,1170.7 345.3,1169.4C335.8,1168.1 326.3,1166.7 316.8,1165.2C307.3,1163.7 297.9,1162 288.4,1160.3C279,1158.5 269.6,1156.6 260.2,1154.6C250.8,1152.6 241.5,1150.4 232.1,1148.1C222.8,1145.8 213.6,1143.4 204.4,1140.8C195.1,1138.2 186,1135.5 176.8,1132.6C167.7,1129.6 158.7,1126.6 149.7,1123.3C140.7,1120.1 131.7,1116.7 122.8,1113.1C114,1109.5 105.1,1105.7 96.4,1101.8C87.7,1097.8 79,1093.7 70.5,1089.4C61.9,1085 53.3,1080.5 45,1075.8C36.5,1071 28.3,1066 20,1061L20,712C27.2,706.5 34.5,701 41.8,695.5C49.3,690 56.8,684.4 64.3,679C72,673.5 79.8,668 87.6,662.7C95.6,657.4 103.6,652.2 111.8,647.1C119.9,642.1 128.2,637.2 136.7,632.6C145.1,627.9 153.7,623.5 162.5,619.4C171.2,615.3 180.1,611.5 189.1,608C198,604.6 207.1,601.5 216.4,598.9C225.5,596.3 234.8,594.1 244.2,592.5C253.4,590.9 262.8,589.8 272.2,589.3C281.6,588.8 291,589 300.3,589.8C309.7,590.7 319,592.1 328.2,594.2C337.4,596.3 346.4,599 355.3,602.2C364.1,605.4 372.8,609.2 381.2,613.4C389.6,617.7 397.7,622.5 405.5,627.8C413.2,633 420.6,638.7 427.7,644.8C434.7,650.9 441.2,657.5 447.4,664.4C453.4,671.3 459,678.6 464.2,686.2C469.3,693.9 474,701.8 478.2,710C482.5,718.3 486.3,726.8 489.6,735.4C493.1,744.2 496.1,753.1 498.7,762.2C501.4,771.4 503.6,780.7 505.6,790C507.5,799.5 509.1,809.1 510.5,818.7C511.8,828.4 512.8,838.1 513.6,847.8C514.3,857.6 514.8,867.4 515.1,877.2C515.4,886.9 515.4,896.7 515.3,906.4C515.1,916.1 514.8,925.7 514.3,935.4C513.8,944.8 513.1,954.2 512.3,963.6C511.5,972.7 510.6,981.8 509.6,990.9C508.6,999.6 507.4,1008.3 506.3,1017L495.7,1015.8C496.4,1006.4 497.1,997.1 497.7,987.7C498.4,978.3 499,968.9 499.5,959.4C500,949.9 500.4,940.4 500.6,930.9C500.9,921.4 501,911.8 500.9,902.3C500.8,892.8 500.5,883.2 500,873.7C499.5,864.1 498.7,854.6 497.6,845.1C496.5,835.5 495.2,826 493.4,816.6C491.7,807.1 489.6,797.6 487.1,788.3C484.6,778.8 481.8,769.5 478.5,760.3C475.2,751 471.5,742 467.3,733.1C463.2,724.3 458.6,715.7 453.5,707.5C448.6,699.3 443.1,691.5 437.1,684C431.3,676.7 424.9,669.8 418,663.5C411.2,657.2 403.9,651.5 396.2,646.4C388.5,641.3 380.4,636.8 372.1,632.9C363.6,629 354.9,625.8 346.1,623.1C337.1,620.4 327.9,618.3 318.7,616.8C309.4,615.3 300,614.4 290.5,614.1C281,613.7 271.5,614 262,614.8C252.4,615.7 243,617.1 233.6,619.1C224.2,621.1 215,623.7 205.9,626.8C196.7,629.9 187.8,633.6 179,637.6C170.2,641.7 161.5,646.2 153.1,651.1C144.6,656 136.2,661.2 128.1,666.7C120,672.2 112,678 104.2,684C96.4,689.9 88.8,696.1 81.4,702.4C74,708.7 66.8,715.1 59.7,721.6C52.8,727.9 46,734.4 39.2,740.9C32.8,747.2 26.4,753.6 20,760L20,1015C28.4,1020 36.8,1024.9 45.3,1029.6C53.8,1034.4 62.4,1038.9 71.1,1043.2C79.8,1047.5 88.5,1051.7 97.4,1055.7C106.2,1059.7 115.1,1063.6 124.1,1067.2C133.1,1070.9 142.1,1074.4 151.2,1077.7C160.3,1081 169.5,1084.2 178.7,1087.2C187.9,1090.2 197.2,1093 206.5,1095.6C215.9,1098.3 225.2,1100.8 234.7,1103.1C244.1,1105.5 253.5,1107.6 263,1109.6C272.5,1111.6 282.1,1113.5 291.6,1115.2C301.2,1116.9 310.8,1118.4 320.4,1119.8C330,1121.2 339.7,1122.4 349.3,1123.4C359,1124.5 368.6,1125.4 378.3,1126.2C388,1126.9 397.7,1127.5 407.4,1128Z" fill="#000" stroke="#000" stroke-width="0.7"/>
<path d="M376,1091.3C366.7,1090.4 357.3,1089.4 348,1088.3C338.7,1087.1 329.3,1085.7 320.1,1084.1C310.8,1082.6 301.6,1080.8 292.4,1078.9C283.2,1076.9 274,1074.8 264.9,1072.5C255.8,1070.2 246.7,1067.6 237.7,1064.9C228.8,1062.2 219.8,1059.3 211,1056.1C202.2,1053 193.4,1049.7 184.7,1046.1C176.1,1042.6 167.5,1038.9 159,1034.9C150.5,1030.9 142.1,1026.8 133.9,1022.4C125.6,1018 117.5,1013.4 109.5,1008.6C101.4,1003.8 93.5,998.7 85.8,993.5C78,988.2 70.4,982.7 62.9,977C55.4,971.3 48.1,965.4 41,959.2C33.8,953 26.9,946.5 20,940L20,880C25.1,872.6 30.2,865.2 35.4,857.9C40.8,850.2 46.3,842.6 51.9,835C57.6,827.3 63.5,819.6 69.5,812.1C75.6,804.4 81.8,796.9 88.2,789.5C94.7,782.1 101.3,774.8 108.2,767.8C115.1,760.8 122.1,754 129.5,747.5C136.7,741 144.2,734.9 152,729.1C159.8,723.4 167.7,718.1 176,713.2C184.2,708.4 192.7,704 201.4,700.3C210.1,696.5 219.1,693.3 228.3,690.8C237.5,688.3 246.9,686.5 256.4,685.3C265.9,684.1 275.5,683.6 285.1,683.8C294.6,684 304.1,684.9 313.5,686.6C322.8,688.2 331.9,690.5 340.8,693.6C349.6,696.6 358.1,700.4 366.2,705C374.3,709.6 381.9,714.9 388.9,721C396,727.1 402.4,734 408.2,741.3C414.1,748.8 419.4,756.8 424,765.1C428.7,773.6 432.8,782.4 436.3,791.4C439.8,800.5 442.7,809.8 445,819.2C447.3,828.7 449,838.2 450.2,847.8C451.5,857.4 452.2,867.1 452.6,876.8C453,886.5 453,896.1 452.8,905.8C452.6,915.4 452.1,925 451.5,934.6C450.9,944.1 450.2,953.5 449.4,963C448.7,972.1 447.9,981.3 447.2,990.5Z" fill="#E83397"/>
<path d="M1260,1161.8C1269.7,1161.7 1279.4,1161.7 1289.1,1161.4C1298.8,1161.2 1308.5,1160.8 1318.2,1160.2C1327.9,1159.6 1337.6,1159 1347.2,1158.2C1356.9,1157.4 1366.6,1156.4 1376.2,1155.4C1385.9,1154.4 1395.5,1153.2 1405.1,1152C1414.7,1150.7 1424.4,1149.4 1434,1147.9C1443.6,1146.5 1453.1,1145 1462.7,1143.4C1472.3,1141.8 1481.9,1140.1 1491.4,1138.4C1500.9,1136.6 1510.5,1134.8 1520,1133L1520,597C1511,593 1502.1,588.9 1492.8,585.8C1483.7,582.6 1474.3,580.3 1464.8,578.6C1455.5,576.9 1446,575.9 1436.6,575.5C1427.2,575.1 1417.8,575.3 1408.5,576.3C1399.3,577.2 1390.2,578.7 1381.2,580.9C1372.3,583.1 1363.5,585.9 1355,589.4C1346.6,592.8 1338.4,596.9 1330.5,601.6C1322.7,606.2 1315.2,611.5 1308.1,617.2C1300.9,623 1294.1,629.3 1287.7,635.9C1281.2,642.6 1275.1,649.7 1269.3,657.1C1263.6,664.5 1258.2,672.2 1253.1,680.2C1248.1,688.2 1243.4,696.3 1239,704.7C1234.7,713 1230.7,721.5 1227,730.2C1223.3,738.8 1220,747.5 1216.9,756.4C1213.9,765.3 1211.1,774.2 1208.7,783.3C1206.2,792.4 1204,801.5 1202,810.7C1200.1,820 1198.4,829.3 1196.9,838.6C1195.4,848 1194.1,857.3 1193,866.8C1192,876.2 1191.1,885.6 1190.4,895.1C1189.7,904.5 1189.1,914 1188.7,923.4C1188.3,932.9 1188.1,942.3 1187.9,951.7C1187.8,961.1 1187.7,970.5 1187.8,979.9C1187.8,989.1 1188,998.4 1188.2,1007.6C1188.4,1016.8 1188.7,1025.9 1189,1035Z" fill="#EE8734"/>
<path d="M1260,1161.8C1269.7,1161.7 1279.4,1161.7 1289.1,1161.4C1298.8,1161.2 1308.5,1160.8 1318.2,1160.2C1327.9,1159.6 1337.6,1159 1347.2,1158.2C1356.9,1157.4 1366.6,1156.4 1376.2,1155.4C1385.9,1154.4 1395.5,1153.2 1405.1,1152C1414.7,1150.7 1424.4,1149.4 1434,1147.9C1443.6,1146.5 1453.1,1145 1462.7,1143.4C1472.3,1141.8 1481.9,1140.1 1491.4,1138.4C1500.9,1136.6 1510.5,1134.8 1520,1133L1520,597C1511,593 1502.1,588.9 1492.8,585.8C1483.7,582.6 1474.3,580.3 1464.8,578.6C1455.5,576.9 1446,575.9 1436.6,575.5C1427.2,575.1 1417.8,575.3 1408.5,576.3C1399.3,577.2 1390.2,578.7 1381.2,580.9C1372.3,583.1 1363.5,585.9 1355,589.4C1346.6,592.8 1338.4,596.9 1330.5,601.6C1322.7,606.2 1315.2,611.5 1308.1,617.2C1300.9,623 1294.1,629.3 1287.7,635.9C1281.2,642.6 1275.1,649.7 1269.3,657.1C1263.6,664.5 1258.2,672.2 1253.1,680.2C1248.1,688.2 1243.4,696.3 1239,704.7C1234.7,713 1230.7,721.5 1227,730.2C1223.3,738.8 1220,747.5 1216.9,756.4C1213.9,765.3 1211.1,774.2 1208.7,783.3C1206.2,792.4 1204,801.5 1202,810.7C1200.1,820 1198.4,829.3 1196.9,838.6C1195.4,848 1194.1,857.3 1193,866.8C1192,876.2 1191.1,885.6 1190.4,895.1C1189.7,904.5 1189.1,914 1188.7,923.4C1188.3,932.9 1188.1,942.3 1187.9,951.7C1187.8,961.1 1187.7,970.5 1187.8,979.9C1187.8,989.1 1188,998.4 1188.2,1007.6C1188.4,1016.8 1188.7,1025.9 1189,1035L1206,1033.7C1205.8,1024.4 1205.6,1015.1 1205.6,1005.8C1205.6,996.4 1205.7,986.9 1205.9,977.5C1206.1,967.9 1206.4,958.4 1206.9,948.9C1207.4,939.3 1208.1,929.7 1208.9,920.1C1209.8,910.5 1210.8,900.9 1212,891.4C1213.2,881.8 1214.6,872.2 1216.3,862.7C1217.9,853.2 1219.8,843.8 1221.9,834.4C1224,825 1226.3,815.7 1229,806.4C1231.6,797.2 1234.4,788.1 1237.6,779C1240.8,770 1244.3,761.1 1248,752.3C1251.8,743.5 1255.9,734.9 1260.3,726.4C1264.7,718 1269.5,709.6 1274.6,701.5C1279.7,693.4 1285.1,685.5 1290.9,677.8C1296.7,670.2 1302.9,662.9 1309.5,656.1C1316,649.3 1323,642.9 1330.4,637.2C1337.6,631.5 1345.3,626.4 1353.5,622.1C1361.6,617.7 1370.2,614.2 1379,611.6C1387.9,609 1397.2,607.3 1406.5,606.4C1416.1,605.4 1425.7,605.3 1435.3,605.8C1445.1,606.4 1454.8,607.7 1464.4,609.6C1474.1,611.5 1483.6,613.9 1492.9,617.1C1502.1,620.3 1511.1,624.1 1520,628L1520,1087C1510.5,1088.9 1501,1090.7 1491.4,1092.4C1481.9,1094.1 1472.3,1095.6 1462.7,1096.9C1453.1,1098.3 1443.5,1099.6 1433.9,1100.8C1424.3,1101.9 1414.7,1103 1405,1103.9C1395.4,1104.9 1385.8,1105.7 1376.1,1106.5C1366.4,1107.3 1356.8,1108 1347.1,1108.6C1337.4,1109.2 1327.8,1109.7 1318.1,1110.2C1308.4,1110.6 1298.7,1111 1289,1111.4C1279.4,1111.7 1269.7,1112 1260,1112.3Z" fill="#000" stroke="#000" stroke-width="0.7"/>
<path d="M1299.3,1072.8C1310,1072.8 1320.6,1072.8 1331.3,1072.4C1341.9,1072.1 1352.5,1071.3 1363.1,1070.4C1373.7,1069.4 1384.3,1068.2 1394.8,1066.8C1405.3,1065.4 1415.9,1063.7 1426.3,1061.9C1436.8,1060.1 1447.3,1058.1 1457.7,1056C1468.2,1053.9 1478.6,1051.7 1488.9,1049.3C1499.3,1046.9 1509.7,1044.5 1520,1042L1520,705C1511.6,700.2 1503.2,695.3 1494.4,691.2C1485.5,687.1 1476.3,683.7 1466.9,681C1457.5,678.2 1448,676.2 1438.4,674.9C1429,673.6 1419.5,673.1 1410,673.6C1400.8,674 1391.6,675.3 1382.7,677.7C1373.9,680.1 1365.4,683.5 1357.4,687.9C1349.3,692.3 1341.7,697.6 1334.7,703.6C1327.5,709.7 1320.9,716.5 1314.8,723.7C1308.6,731.1 1303,738.9 1297.9,747.1C1292.9,755.2 1288.3,763.7 1284.3,772.5C1280.3,781.1 1276.8,790.1 1273.7,799.2C1270.7,808.3 1268.1,817.5 1265.9,826.9C1263.7,836.2 1261.9,845.7 1260.5,855.3C1259,864.8 1257.9,874.5 1257,884.1C1256.1,893.7 1255.5,903.4 1255.1,913.1C1254.7,922.7 1254.4,932.3 1254.4,941.9C1254.3,951.4 1254.3,960.9 1254.5,970.3C1254.6,979.5 1254.8,988.8 1255,998Z" fill="#E83397"/>
<path d="M346.2,1437.6C338.2,1431.8 330.2,1426.1 322.1,1420.5C314,1414.9 305.8,1409.4 297.4,1404C289.1,1398.7 280.7,1393.4 272.1,1388.4C263.6,1383.3 255,1378.4 246.2,1373.7C237.5,1369 228.7,1364.5 219.8,1360.2C210.9,1355.9 201.9,1351.9 192.8,1348C183.7,1344.2 174.5,1340.6 165.2,1337.3C155.9,1334 146.6,1331 137.1,1328.3C127.7,1325.6 118.2,1323.1 108.6,1321.1C98.9,1319 89.2,1317.2 79.5,1315.8C69.7,1314.4 59.8,1313.3 50,1312.8C40,1312.2 30,1312.1 20,1312L20,1553C27.9,1558.8 35.7,1564.6 43.6,1570.4C51.5,1576.1 59.5,1581.8 67.5,1587.4C75.5,1593.1 83.5,1598.6 91.6,1604.1C99.7,1609.6 107.8,1615 116,1620.4C124.2,1625.7 132.5,1630.9 140.8,1636.1C149.1,1641.2 157.4,1646.3 165.9,1651.2C174.3,1656.1 182.8,1660.9 191.4,1665.6C200,1670.3 208.6,1674.9 217.3,1679.3C226,1683.7 234.9,1688 243.7,1692.2L264,1647.3L275.3,1615Z" fill="#EE8734"/>
<path d="M20,1312C30,1312.1 40,1312.2 50,1312.8C59.8,1313.3 69.7,1314.4 79.5,1315.8C89.2,1317.2 98.9,1319 108.6,1321.1C118.2,1323.1 127.7,1325.6 137.1,1328.3C146.6,1331 155.9,1334 165.2,1337.3C174.5,1340.6 183.7,1344.2 192.8,1348C201.9,1351.9 210.9,1355.9 219.8,1360.2C228.7,1364.5 237.5,1369 246.2,1373.7C255,1378.4 263.6,1383.3 272.1,1388.4C280.7,1393.4 289.1,1398.7 297.4,1404C305.8,1409.4 314,1414.9 322.1,1420.5C330.2,1426.1 338.2,1431.8 346.2,1437.6L342,1443C333.9,1438 325.7,1432.9 317.5,1428C309.3,1423 301,1418.2 292.6,1413.4C284.2,1408.6 275.8,1404 267.2,1399.4C258.7,1394.9 250.1,1390.4 241.5,1386.2C232.8,1381.9 224.1,1377.8 215.3,1373.9C206.5,1370 197.6,1366.2 188.6,1362.7C179.7,1359.2 170.7,1355.9 161.6,1352.8C152.5,1349.8 143.3,1346.9 134.1,1344.4C124.9,1341.9 115.6,1339.6 106.2,1337.6C96.8,1335.7 87.4,1334 77.9,1332.7C68.3,1331.4 58.8,1330.3 49.2,1329.8C39.5,1329.2 29.7,1329.1 20,1329Z" fill="#000" stroke="#000" stroke-width="0.7"/>
<path d="M20,1460C28.3,1465.6 36.5,1471.1 44.8,1476.7C53,1482.3 61.2,1488 69.4,1493.7C77.7,1499.3 85.9,1505 94.1,1510.7C102.3,1516.3 110.6,1521.9 118.9,1527.5C127.1,1533.1 135.4,1538.6 143.8,1544C152.2,1549.4 160.6,1554.8 169.1,1560C177.6,1565.2 186.1,1570.3 194.8,1575.3C203.4,1580.2 212.1,1585 221,1589.7C229.8,1594.3 238.7,1598.8 247.8,1603C256.9,1607.2 266.1,1611.1 275.3,1615L264,1647.3C255.2,1643.7 246.3,1640.2 237.6,1636.3C228.9,1632.5 220.3,1628.4 211.9,1624.1C203.4,1619.9 195,1615.5 186.7,1610.9C178.4,1606.3 170.2,1601.6 162.1,1596.7C153.9,1591.9 145.9,1586.9 137.9,1581.8C129.8,1576.7 121.9,1571.6 114,1566.3C106,1561.1 98.2,1555.8 90.3,1550.4C82.5,1545.1 74.6,1539.7 66.8,1534.3C59,1528.9 51.2,1523.5 43.4,1518.1C35.6,1512.7 27.8,1507.4 20,1502Z" fill="#B56624"/>
<path d="M20,1502C27.8,1507.4 35.6,1512.7 43.4,1518.1C51.2,1523.5 59,1528.9 66.8,1534.3C74.6,1539.7 82.5,1545.1 90.3,1550.4C98.2,1555.8 106,1561.1 114,1566.3C121.9,1571.6 129.8,1576.7 137.9,1581.8C145.9,1586.9 153.9,1591.9 162.1,1596.7C170.2,1601.6 178.4,1606.3 186.7,1610.9C195,1615.5 203.4,1619.9 211.9,1624.1C220.3,1628.4 228.9,1632.5 237.6,1636.3C246.3,1640.2 255.2,1643.7 264,1647.3L243.7,1692.2C234.9,1688 226,1683.7 217.3,1679.3C208.6,1674.9 200,1670.3 191.4,1665.6C182.8,1660.9 174.3,1656.1 165.9,1651.2C157.4,1646.3 149.1,1641.2 140.8,1636.1C132.5,1630.9 124.2,1625.7 116,1620.4C107.8,1615 99.7,1609.6 91.6,1604.1C83.5,1598.6 75.5,1593.1 67.5,1587.4C59.5,1581.8 51.5,1576.1 43.6,1570.4C35.7,1564.6 27.9,1558.8 20,1553Z" fill="#000" stroke="#000" stroke-width="0.7"/>
<path d="M1334,1426.2 L1389,1389 L1446.7,1354.7 L1520,1318 L1520,1611 L1473.8,1648.4 L1419.9,1692.4 L1398,1650 L1389,1607.2Z" fill="#EE8734"/>
<path d="M1520,1318C1510.7,1322.4 1501.5,1326.8 1492.3,1331.4C1483.1,1335.9 1473.9,1340.6 1464.8,1345.3C1455.7,1350.1 1446.7,1355 1437.8,1360C1428.8,1365 1419.9,1370.1 1411.1,1375.4C1402.3,1380.6 1393.5,1386 1384.9,1391.5C1376.2,1397 1367.6,1402.6 1359.2,1408.4C1350.7,1414.2 1342.3,1420.2 1334,1426.2L1339,1434.7C1347.4,1429.6 1355.7,1424.5 1364.1,1419.5C1372.6,1414.5 1381.1,1409.6 1389.6,1404.8C1398.1,1400 1406.7,1395.2 1415.3,1390.6C1424,1385.9 1432.6,1381.3 1441.3,1376.8C1450,1372.2 1458.7,1367.7 1467.4,1363.3C1476.2,1358.8 1484.9,1354.4 1493.7,1350.1C1502.4,1345.7 1511.2,1341.3 1520,1337Z" fill="#000" stroke="#000" stroke-width="0.7"/>
<path d="M1389,1607.2 L1473.8,1556.7 L1520,1529 L1520,1576 L1473.8,1603.8 L1398,1650Z" fill="#B56624"/>
<path d="M1398,1650 L1473.8,1603.8 L1520,1575 L1520,1611 L1473.8,1648.4 L1419.9,1692.4Z" fill="#000" stroke="#000" stroke-width="0.7"/>
<path d="M547.8,1380.8 L795.3,1380.8 Q792,1412 774.4,1437.2 L774.4,1406 L553,1406Z" fill="#000"/>
<path d="M1154.8,1380.8 L910.4,1380.8 Q914,1406 931.2,1430.7 L931.2,1409 L1147,1409Z" fill="#000"/>
<ellipse cx="866" cy="1477.6" rx="43.4" ry="42" fill="#000"/>
</svg>
<div id="tab" class="abs" style=""></div>
<div id="leftbar" class="abs" style=""><svg class="abs txt" style="left:0px;top:0px" width="74" height="2732" viewBox="0 0 74 2732"><rect x="2" y="96" width="2.2" height="50" fill="#3d85d8"/><path d="M25.9,104.3 L47.4,123.3 L38.3,125.2 L43.8,136.9 L38.9,139 L33.2,127.3 L25.9,133.4Z" fill="#8a8a8a"/><path d="M26.6,190 L47,205 L34.6,208 L26.6,216.5Z" fill="#858585" stroke="#3d85d8" stroke-width="1.5" stroke-linejoin="miter"/><path d="M27.6,192.5 L29.2,193.7 L29.2,211 L27.6,213Z" fill="#e8e8e8"/><g opacity="0.85"><path d="M30.5,271.6 H48.5 M49.8,275 V291.5" stroke="#2c63a6" stroke-width="1.4" fill="none"/><path d="M28.5,294 L47,275.5" stroke="#777" stroke-width="1" stroke-dasharray="3 2" fill="none"/><circle cx="48.6" cy="273" r="3" fill="#6b6b6b"/><circle cx="27.5" cy="294.5" r="5" fill="none" stroke="#666" stroke-width="1"/><path d="M22.5,294.5 H32.5 M27.5,289.5 V299.5" stroke="#666" stroke-width="1"/></g><circle cx="37" cy="367" r="17.4" fill="none" stroke="#3d85d8" stroke-width="1.6"/><circle cx="37" cy="367" r="12.4" fill="none" stroke="#d0d0d0" stroke-width="2"/><circle cx="37" cy="367" r="8" fill="none" stroke="#3d85d8" stroke-width="1.8"/><path d="M42,361.5 L36,367.5" stroke="#e0e0e0" stroke-width="1.6"/><path d="M34.8,363.8 V368.8 H39.8Z" fill="#e0e0e0"/><path d="M49,355.5 L54,350.5" stroke="#9a9a9a" stroke-width="1.4"/><path d="M50.4,349.4 H55 V354Z" fill="#9a9a9a"/><path d="M54.5,438 H47.5 C38,438 31.5,441 30.7,443 C27,447 25.7,452 25.7,459.5 V467" fill="none" stroke="#8a8a8a" stroke-width="1.5"/><circle cx="47.4" cy="438" r="3" fill="#8a8a8a"/><circle cx="25.7" cy="459.4" r="3" fill="#8a8a8a"/><path d="M20.6,433.2 L41,452.6" stroke="#3d85d8" stroke-width="1.8"/><path d="M19.2,434.6 L22,431.6 M39.6,454.2 L42.4,451.2" stroke="#3d85d8" stroke-width="1.5"/><circle cx="30.7" cy="442.9" r="3.4" fill="#3d85d8" stroke="#e6e6e6" stroke-width="1.5"/><g transform="translate(19.9,548.3) rotate(-44.5)"><path d="M0,0 L9,-4 H37 V4 H9Z" fill="#7c7c7c"/><path d="M9,-4 H37 V-1.2 H9Z" fill="#a0a0a0"/><path d="M9,1.4 H37 V4 H9Z" fill="#5e5e5e"/><path d="M0,0 L9,-4 V4Z" fill="#9a9a9a"/><path d="M0,0 L3.4,-1.5 V1.5Z" fill="#3d85d8"/><rect x="37" y="-4" width="1.5" height="8" fill="#e4e4e4"/><rect x="39.3" y="-4" width="1.5" height="8" fill="#e4e4e4"/><rect x="38.5" y="-4" width="0.8" height="8" fill="#555"/><rect x="40.8" y="-4" width="5.2" height="8" rx="1" fill="#6c6c6c"/></g><path d="M20,548 L23.5,546.2" stroke="#3d85d8" stroke-width="2"/><path d="M27.5,547.8 C36,550 40,541.5 45.5,541.7 C49.5,542 51.5,545 53.5,547.2" fill="none" stroke="#3d85d8" stroke-width="1.7"/><path d="M22,609 V628" stroke="#3d85d8" stroke-width="1.5"/><circle cx="22" cy="609.6" r="1.9" fill="#3d85d8"/><circle cx="22" cy="618.6" r="1.9" fill="#3d85d8"/><circle cx="22" cy="627.4" r="1.9" fill="#3d85d8"/><path d="M23.5,621.5 C30,632 38,629.5 43,625 C47.5,621.5 51,623 54,626.5" fill="none" stroke="#3d85d8" stroke-width="1.7"/><g transform="translate(29.5,619.5) rotate(-45)"><path d="M0,0 C4,-6 12,-6.5 17,-3.4 V3.4 C12,6.5 4,6 0,0Z" fill="#8e8e8e"/><path d="M0,0 C4,-6 12,-6.5 17,-3.4 V-0.4 C10,-2 5,-1 0,0Z" fill="#b8b8b8"/><rect x="17" y="-2.6" width="9" height="5.2" fill="#e2e2e2"/><path d="M26,-3.4 H33 L35.4,0 L33,3.4 H26Z" fill="#777"/></g><g transform="translate(20.6,710.2) rotate(-44)"><path d="M0,0 L20,-9.6 L27.5,-5.4 V5.4 L20,9.6Z" fill="#8d8d8d"/><path d="M0,0 L20,-9.6 L27.5,-5.4 V0Z" fill="#a8a8a8"/><path d="M0,0 H16" stroke="#444" stroke-width="1"/><circle cx="18.6" cy="0" r="3" fill="#222" stroke="#3d85d8" stroke-width="1.7"/><path d="M29.5,-5.6 H38 V5.6 H29.5Z" fill="#d9d9d9"/><path d="M29.5,0 H38 V5.6 H29.5Z" fill="#9c9c9c"/><path d="M38,-5.6 L46.5,-3 V3 L38,5.6Z" fill="#6f6f6f"/></g><defs><linearGradient id="fg" x1="0.72" y1="0.12" x2="0.22" y2="0.8"><stop offset="0" stop-color="#3d8fe2"/><stop offset="0.4" stop-color="#2f74c0"/><stop offset="1" stop-color="#1d3552" stop-opacity="0.12"/></linearGradient></defs><path d="M37,760.5 L53.8,777 L37,793.8 L20.4,777Z" fill="url(#fg)"/><path d="M23.5,790.6 L50.6,763.5" stroke="#a8a8a8" stroke-width="1.5"/><circle cx="50.6" cy="763.5" r="3" fill="#ededed"/><circle cx="23.5" cy="790.6" r="3" fill="#ededed"/><path d="M30.4,841.2 H43.4 C44.6,850 45.2,855 43.6,858.4 C42,861.6 39.4,862.6 36.9,862.6 C34.4,862.6 31.8,861.6 30.2,858.4 C28.6,855 29.2,850 30.4,841.2Z" fill="#868686"/><path d="M30.4,841.2 H43.4 L43.7,843.6 H30.1Z" fill="#e4e4e4"/><path d="M29.3,853.5 C33,856.5 40,857 44.6,853.8 C44.8,856 44.4,857.4 43.6,858.4 C42,861.6 39.4,862.6 36.9,862.6 C34.4,862.6 31.8,861.6 30.2,858.4 C29.6,857 29.2,855.6 29.3,853.5Z" fill="#3d85d8"/><path d="M36.1,862.4 H37.9 V874 C39.6,875.2 42,876 43.2,877 H30.6 C31.8,876 34.4,875.2 36.1,874Z" fill="#8e8e8e"/><path d="M25.8,923.4 V954.2 H54.8 M18.9,930.4 H47.9 V959.2" fill="none" stroke="#9c9c9c" stroke-width="3.6"/><rect x="27.2" y="931.8" width="19.4" height="19.4" fill="none" stroke="#3d85d8" stroke-width="2"/><path d="M21.4,956.8 L53,925.2" stroke="#d8d8d8" stroke-width="1.6"/><rect x="20.2" y="1005.9" width="33.6" height="34" fill="#808080" stroke="#3d85d8" stroke-width="1.9"/><path d="M68,1044.6 V1054 H58.4Z" fill="#565656"/><rect x="21.2" y="1089.4" width="31.4" height="31.4" fill="none" stroke="#3d85d8" stroke-width="1.5"/><rect x="19.0" y="1087.2" width="4.4" height="4.4" fill="#3d85d8"/><rect x="50.4" y="1087.2" width="4.4" height="4.4" fill="#3d85d8"/><rect x="19.0" y="1118.6" width="4.4" height="4.4" fill="#3d85d8"/><rect x="50.4" y="1118.6" width="4.4" height="4.4" fill="#3d85d8"/><text x="36.9" y="1118" font-family="Liberation Serif" font-size="36" fill="#cfcfcf" text-anchor="middle">A</text><path d="M68,1126.6 V1136 H58.4Z" fill="#565656"/><g transform="translate(21,1203) rotate(-44.3)"><path d="M0,-1.8 L4,-2.6 V2.6 L0,1.8Z" fill="#3d85d8"/><rect x="4" y="-2.8" width="20" height="5.6" fill="#cfcfcf"/><rect x="4" y="0" width="20" height="2.8" fill="#9a9a9a"/><rect x="23" y="-5.6" width="3.6" height="11.2" rx="1" fill="#5c5c5c"/><rect x="26.6" y="-3.4" width="6" height="6.8" fill="#6a6a6a"/><circle cx="38" cy="0" r="7.2" fill="#7d7d7d"/></g><path d="M26.6,2485.5 L47.2,2506.2 M47.2,2485.5 L26.6,2506.2" stroke="#868686" stroke-width="5.2"/><g transform="translate(40.6,2575.6) rotate(45)"><path d="M-10.4,9 V-1.5 A10.4,10.4 0 0 1 10.4,-1.5 V9 H4.4 V-1.5 A4.4,4.4 0 0 0 -4.4,-1.5 V9Z" fill="#868686"/><rect x="-10.4" y="10.4" width="6" height="5.8" fill="#868686"/><rect x="4.4" y="10.4" width="6" height="5.8" fill="#868686"/></g><rect x="34" y="2658.8" width="6" height="3" fill="#868686"/><path d="M24.8,2667.6 C24.8,2664.6 26.6,2663.4 28.6,2663.4 H45.4 C47.4,2663.4 49.2,2664.6 49.2,2667.6Z" fill="#868686"/><path d="M26.6,2669.8 H47.4 V2691.8 H26.6Z M29.8,2672.6 V2688.6 H32.6 V2672.6Z M35.6,2672.6 V2688.6 H38.4 V2672.6Z M41.4,2672.6 V2688.6 H44.2 V2672.6Z" fill="#868686" fill-rule="evenodd"/></svg></div>
<div id="topbar" class="abs" style=""><svg class="abs" style="left:0px;top:0px" width="640" height="74" viewBox="0 0 640 74"><rect x="24" y="13" width="96" height="47.5" rx="23.75" fill="#3a3a3a"/><path d="M91.8,36.9 H53.5 M62.6,24.8 L52.6,36.9 L62.6,49" fill="none" stroke="#9b9b9b" stroke-width="3" stroke-linecap="round" stroke-linejoin="round"/><rect x="160.2" y="12" width="1.8" height="50" fill="#3b3b3b"/><rect x="370.2" y="12" width="1.8" height="50" fill="#3b3b3b"/><circle cx="224.8" cy="36.9" r="24" fill="#3a3a3a"/><path d="M214.2,24.6 H230.2 L237.2,31.6 V49.4 H214.2Z" fill="none" stroke="#b4b4b4" stroke-width="2"/><path d="M230.2,24.6 L237.2,31.6 H230.2Z" fill="#b4b4b4"/><circle cx="220" cy="44.4" r="1.8" fill="#c4c4c4"/><circle cx="225.6" cy="44.4" r="1.8" fill="#c4c4c4"/><circle cx="231.2" cy="44.4" r="1.8" fill="#c4c4c4"/><circle cx="306.8" cy="36.9" r="24" fill="#3a3a3a"/><circle cx="296.6" cy="36.9" r="3" fill="#8c8c8c"/><circle cx="306.8" cy="36.9" r="3" fill="#8c8c8c"/><circle cx="317" cy="36.9" r="3" fill="#8c8c8c"/><g transform="translate(416.9,18.7)"><rect x="0" y="0" width="36.3" height="36.3" rx="9.4" fill="#4db2cd"/><clipPath id="adc"><rect x="0" y="0" width="36.3" height="36.3" rx="9.4"/></clipPath><g clip-path="url(#adc)" fill="none" stroke="#1f1f1f" stroke-width="1.7" stroke-linejoin="miter"><path d="M14.9,-0.8 L0,26.2"/><path d="M22.6,-0.8 L9.5,23.3 L18,37.4"/><path d="M9.5,23.3 H37"/><path d="M16,12.2 L21.8,23.3"/></g><path d="M15.6,15.4 L19.6,21.9 H12.5Z" fill="#a4f0fb"/></g><circle cx="509.8" cy="22.3" r="2.9" fill="#838383"/><circle cx="517.1" cy="22.3" r="2.9" fill="#838383"/><circle cx="524.4" cy="22.3" r="2.9" fill="#838383"/><circle cx="502.5" cy="29.6" r="2.9" fill="#838383"/><circle cx="509.8" cy="29.6" r="2.9" fill="#838383"/><rect x="514.3" y="26.8" width="5.6" height="5.6" fill="#838383"/><circle cx="524.4" cy="29.6" r="2.9" fill="#838383"/><circle cx="531.7" cy="29.6" r="2.9" fill="#838383"/><circle cx="502.5" cy="36.9" r="2.9" fill="#838383"/><rect x="507.0" y="34.1" width="5.6" height="5.6" fill="#838383"/><rect x="514.3" y="34.1" width="5.6" height="5.6" fill="#838383"/><rect x="521.6" y="34.1" width="5.6" height="5.6" fill="#838383"/><circle cx="531.7" cy="36.9" r="2.9" fill="#838383"/><circle cx="502.5" cy="44.2" r="2.9" fill="#838383"/><circle cx="509.8" cy="44.2" r="2.9" fill="#838383"/><rect x="514.3" y="41.4" width="5.6" height="5.6" fill="#838383"/><circle cx="524.4" cy="44.2" r="2.9" fill="#838383"/><circle cx="531.7" cy="44.2" r="2.9" fill="#838383"/><circle cx="509.8" cy="51.5" r="2.9" fill="#838383"/><circle cx="517.1" cy="51.5" r="2.9" fill="#838383"/><circle cx="524.4" cy="51.5" r="2.9" fill="#838383"/><g fill="#838383" transform="translate(580.7,18.6)"><rect x="0" y="3.6" width="24" height="7"/><rect x="0" y="12.4" width="7.4" height="6"/><rect x="9" y="12.4" width="7.4" height="6"/><rect x="0" y="20" width="16.4" height="16.6"/><rect x="18" y="12.4" width="15" height="24.2"/><path d="M26,10 L33.5,2.5" stroke="#838383" stroke-width="2.6" fill="none"/><path d="M27.5,0 H36.6 V9.1Z"/></g></svg></div>
<svg class="abs" style="left:0px;top:230px" width="140" height="140" viewBox="0 230 140 140"><clipPath id="cl1"><rect x="0" y="230" width="74" height="140"/></clipPath><clipPath id="cl2"><rect x="74" y="230" width="60" height="140"/></clipPath><circle cx="59.8" cy="296" r="37.2" fill="none" stroke="#343434" stroke-width="2" clip-path="url(#cl1)"/><circle cx="59.8" cy="296" r="37.2" fill="none" stroke="#bcbcbc" stroke-width="2" clip-path="url(#cl2)"/><path d="M52,274.6 L74.4,295.8 L52,317" fill="none" stroke="#7e7e7e" stroke-width="4.6" stroke-linecap="round" stroke-linejoin="miter" clip-path="url(#cl1)"/><path d="M52,274.6 L74.4,295.8 L52,317" fill="none" stroke="#b9b9b9" stroke-width="4.6" stroke-linecap="round" stroke-linejoin="miter" clip-path="url(#cl2)"/></svg>
<div id="layers" class="abs" style=""><div id="lhead" class="abs" style=""><div class="abs ttl" style="left:25px;top:17.5px;font-size:27px;color:#b4b4b4;letter-spacing:0.6px">Layers</div><svg class="abs" style="left:0px;top:0px" width="500" height="64" viewBox="0 0 500 64"><rect x="389" y="13" width="38" height="38" fill="none" stroke="#7a7a7a" stroke-width="2.2"/><rect x="398" y="22.05" width="20.2" height="3.9" fill="#808080"/><rect x="398" y="30.05" width="20.2" height="3.9" fill="#808080"/><rect x="398" y="38.05" width="20.2" height="3.9" fill="#808080"/><rect x="449.1" y="13" width="37.8" height="38" fill="#2c2c2c" stroke="#f6f6f6" stroke-width="2.2"/><defs><linearGradient id="ping" x1="0" y1="0" x2="1" y2="0"><stop offset="0" stop-color="#f4f4f4"/><stop offset="0.45" stop-color="#cfcfcf"/><stop offset="1" stop-color="#8e8e8e"/></linearGradient></defs><g transform="translate(465.9,35.3) rotate(40)"><rect x="-0.8" y="0" width="1.6" height="13.6" fill="#e4e4e4"/><path d="M-5.8,-1 C-5.2,-4 -3.3,-6 -3.3,-9 C-3.3,-12 -4.6,-14 -5,-16 H5 C4.6,-14 3.3,-12 3.3,-9 C3.3,-6 5.2,-4 5.8,-1Z" fill="url(#ping)"/><rect x="-8.7" y="-1.3" width="17.4" height="2.5" rx="1.2" fill="#d6d6d6"/><rect x="-5.4" y="-18.5" width="10.8" height="1.9" rx="0.9" fill="#e6e6e6"/></g></svg></div><div id="ltools" class="abs" style=""><div class="abs" style="left:38px;top:14px;width:72px;height:72px;background:#2e2e2e;border-radius:4px"></div><div class="abs" style="left:126px;top:14px;width:72px;height:72px;background:#2e2e2e;border-radius:4px"></div><div class="abs" style="left:214px;top:14px;width:72px;height:72px;background:#2e2e2e;border-radius:4px"></div><div class="abs" style="left:302px;top:14px;width:72px;height:72px;background:#2e2e2e;border-radius:4px"></div><div class="abs" style="left:390px;top:14px;width:72px;height:72px;background:#2e2e2e;border-radius:4px"></div><svg class="abs" style="left:0px;top:0px" width="500" height="98" viewBox="0 0 500 98"><circle cx="73.9" cy="49.8" r="15" fill="none" stroke="#898989" stroke-width="2.6"/><circle cx="66.0" cy="49.9" r="2.7" fill="#898989"/><circle cx="73.9" cy="49.9" r="2.7" fill="#898989"/><circle cx="81.80000000000001" cy="49.9" r="2.7" fill="#898989"/><path d="M147.3,41.3 L163.4,34.2 L177.1,40.2 L160.7,47.4Z" fill="none" stroke="#898989" stroke-width="2.9" stroke-linejoin="bevel"/><rect x="148.1" y="48.3" width="3" height="3" fill="#898989" transform="rotate(20 149.6 49.8)"/><rect x="154.4" y="50.7" width="3" height="3" fill="#898989" transform="rotate(20 155.9 52.2)"/><rect x="160.4" y="51.7" width="3" height="3" fill="#898989" transform="rotate(20 161.9 53.2)"/><rect x="166.2" y="49.2" width="3" height="3" fill="#898989" transform="rotate(20 167.7 50.7)"/><rect x="172.3" y="46.3" width="3" height="3" fill="#898989" transform="rotate(20 173.8 47.8)"/><path d="M145.8,54.1 L160.7,59.9 L178.6,52.2" fill="none" stroke="#898989" stroke-width="2.7"/><path d="M145.8,60.2 L160.7,65.7 L178.6,58.5" fill="none" stroke="#898989" stroke-width="2.7"/><rect x="234.1" y="34.1" width="31.8" height="31.8" fill="none" stroke="#898989" stroke-width="1.3"/><circle cx="234.1" cy="34.1" r="2" fill="#898989"/><circle cx="265.9" cy="34.1" r="2" fill="#898989"/><circle cx="234.1" cy="65.9" r="2" fill="#898989"/><circle cx="265.9" cy="65.9" r="2" fill="#898989"/><rect x="237.7" y="38" width="24.6" height="24.1" rx="0.8" fill="#898989"/><path d="M252.9,38 V45.2 A7,5.7 0 1 0 252.9,54.6 V62.1" fill="none" stroke="#2e2e2e" stroke-width="1.7"/><path d="M326,50 h24 M338,38 v24" stroke="#898989" stroke-width="2.4" fill="none"/><rect x="423.5" y="33.6" width="5" height="2.6" fill="#898989"/><path d="M414.2,41.2 c0,-3 1.6,-4 3.6,-4 h16.4 c2,0 3.6,1 3.6,4Z" fill="#898989"/><path d="M415.6,43.4 h20.8 v22 h-20.8Z M418.8,46.2 v16 h2.8 v-16Z M424.6,46.2 v16 h2.8 v-16Z M430.4,46.2 v16 h2.8 v-16Z" fill="#898989" fill-rule="evenodd"/></svg></div><div class="abs row" style="top:162px;height:95.5px;background:#2f2f2f"><div class="abs sep" style="left:0px;top:93.5px;width:500px"></div><svg class="abs" style="left:39px;top:9.5px" width="84" height="84" viewBox="0 0 84 84"><rect x="5" y="28" width="74" height="18" fill="#EE8734"/><rect x="11" y="49" width="24" height="7" fill="#EE8734"/><rect x="48" y="49" width="24" height="7" fill="#EE8734"/></svg><svg class="abs" style="left:0;top:0" width="80" height="94" viewBox="0 0 80 94"><path d="M14.5,44.0 h19 l-9.5,15.5Z" fill="#a9a9a9"/></svg><div class="abs sub" style="left:134px;top:24.5px;color:#b6b6b6">Layer</div><div class="abs name" style="left:134px;top:51.0px;color:#c2c2c2;letter-spacing:0.0px">Layer1</div><div class="abs cb" style="top:36.0px;"><svg width="28" height="28" viewBox="0 0 28 28"><path d="M6.5,14.5 L11.5,20.5 L21.5,6.5" fill="none" stroke="#8c8c8c" stroke-width="2.6"/></svg></div><div class="abs" style="left:495.6px;top:10px;width:4.4px;height:82px;background:#3d7bd9"></div></div><div class="abs row" style="top:257.5px;height:88px;background:#262626"><div class="abs" style="left:0;top:0;width:23px;height:88px;background:linear-gradient(90deg,#2b2b2b,#333 17px,#2b2b2b)"></div><div class="abs" style="left:22px;top:0;width:2px;height:88px;background:#444"></div><div class="abs sep" style="left:23px;top:86px;width:477px"></div><svg class="abs" style="left:63px;top:1.5px" width="84" height="84" viewBox="0 0 84 84"><rect x="5" y="30.5" width="74" height="23" fill="#EE8734"/></svg><div class="abs name" style="left:158.5px;top:31.5px;letter-spacing:0.42px">Rectangle</div><div class="abs cb" style="top:28.0px;"><svg width="28" height="28" viewBox="0 0 28 28"><path d="M6.5,14.5 L11.5,20.5 L21.5,6.5" fill="none" stroke="#8c8c8c" stroke-width="2.6"/></svg></div></div><div class="abs row" style="top:345.5px;height:88px;background:#262626"><div class="abs" style="left:0;top:0;width:23px;height:88px;background:linear-gradient(90deg,#2b2b2b,#333 17px,#2b2b2b)"></div><div class="abs" style="left:22px;top:0;width:2px;height:88px;background:#444"></div><div class="abs sep" style="left:23px;top:86px;width:477px"></div><svg class="abs" style="left:63px;top:1.5px" width="84" height="84" viewBox="0 0 84 84"><rect x="5" y="30.5" width="74" height="23" fill="#EE8734"/></svg><div class="abs name" style="left:158.5px;top:31.5px;letter-spacing:0.42px">Rectangle</div><div class="abs cb" style="top:28.0px;"><svg width="28" height="28" viewBox="0 0 28 28"><path d="M6.5,14.5 L11.5,20.5 L21.5,6.5" fill="none" stroke="#8c8c8c" stroke-width="2.6"/></svg></div></div><div class="abs row" style="top:433.5px;height:88px;background:#262626"><div class="abs" style="left:0;top:0;width:23px;height:88px;background:linear-gradient(90deg,#2b2b2b,#333 17px,#2b2b2b)"></div><div class="abs" style="left:22px;top:0;width:2px;height:88px;background:#444"></div><div class="abs sep" style="left:23px;top:86px;width:477px"></div><svg class="abs" style="left:63px;top:1.5px" width="84" height="84" viewBox="0 0 84 84"><rect x="5" y="33" width="74" height="18" fill="#EE8734"/></svg><div class="abs name" style="left:158.5px;top:31.5px;letter-spacing:0.42px">Rectangle</div><div class="abs cb" style="top:28.0px;"><svg width="28" height="28" viewBox="0 0 28 28"><path d="M6.5,14.5 L11.5,20.5 L21.5,6.5" fill="none" stroke="#8c8c8c" stroke-width="2.6"/></svg></div></div><div class="abs row" style="top:521.5px;height:88px;background:#2f2f2f"><div class="abs sep" style="left:0px;top:86px;width:500px"></div><svg class="abs" style="left:39px;top:1.5px" width="84" height="84" viewBox="0 0 84 84"><path d="M41.9,13.2C40.7,13.2 39.5,13.3 38.3,13.5C37.1,13.7 35.9,14 34.7,14.3C33.6,14.7 32.5,15.1 31.4,15.6C30.4,16.2 29.4,16.8 28.4,17.5C27.5,18.2 26.6,19 25.8,19.8C25,20.7 24.3,21.7 23.7,22.7C23,23.8 22.5,24.9 22.1,26.1C21.7,27.4 21.3,28.7 21.1,30C20.7,31.5 20.5,32.9 20.4,34.5C20.4,35.8 20.5,37.2 19.6,38.1C19.2,38.7 18.4,39 17.8,39C16.6,39.1 15.6,38 14.5,37.3C13.3,36.6 11.9,36.3 10.5,36.5C9.3,36.6 8,37 7.3,37.9C6.7,38.7 6.6,39.9 6.8,40.9C7,42.3 7.7,43.4 8.6,44.4C9.5,45.5 10.7,46.4 11.8,47.2C13,47.9 14.1,48.5 15.4,49.2C16.3,49.8 17.3,50.4 17.7,51.3C18,52.1 17.8,53.2 17.4,54.1C16.9,55.4 16.2,56.4 15.5,57.5C14.7,58.6 14,59.8 13.5,61.1C13,62.2 12.6,63.4 12.5,64.7C12.3,65.9 12.3,67.2 12.4,68.4C12.6,69.7 12.9,71 13.4,72.3C13.9,73.4 14.5,74.6 15.4,75.1C16.2,75.4 17.3,75.2 18.1,74.9C19.3,74.5 20.3,73.8 21.3,73C22.3,72.2 23.4,71.5 24.5,70.7C25.5,69.9 26.6,69.2 27.7,68.4C28.7,67.7 29.8,67 30.9,66.3C32,65.7 33.1,65.1 34.2,64.5C35.2,64 36.3,63.6 37.5,63.3C38.6,62.9 39.7,62.7 40.8,62.6C41.9,62.5 43,62.5 44.2,62.7C45.3,62.8 46.4,63.1 47.6,63.5C48.7,63.9 49.8,64.4 50.9,65C52.1,65.5 53.2,66.2 54.3,66.8C55.4,67.5 56.5,68.3 57.5,69.1C58.6,69.8 59.6,70.6 60.7,71.5C61.6,72.3 62.6,73.1 63.6,73.9C64.5,74.6 65.5,75.3 66.6,75.6C67.6,75.7 68.7,75.5 69.5,74.9C70.4,74.2 70.8,73 71,71.8C71.3,70.5 71.4,69.2 71.5,67.9C71.5,66.6 71.5,65.4 71.3,64.1C71.1,62.9 70.8,61.7 70.3,60.6C69.7,59.3 69,58.2 68.2,57.2C67.4,56.2 66.6,55.2 66,54C65.6,53.1 65.3,52.1 65.5,51.2C65.8,50.2 66.7,49.4 67.6,48.7C68.7,47.7 69.9,47 71.1,46.2C72.3,45.4 73.5,44.6 74.7,43.8C75.8,43 76.7,42.2 77.3,41C77.8,40.1 78,38.9 77.5,38.1C77,37.3 75.8,36.9 74.7,36.9C73.1,36.8 71.8,37.4 70.6,38C69.4,38.6 68.4,39.3 67,40.1C66.2,40.5 65.3,41.1 64.7,40.8C64.2,40.5 64,39.5 63.9,38.6C63.7,37.1 63.8,35.9 63.8,34.7C63.8,33.3 63.7,31.7 63.4,30.3C63.2,28.9 62.9,27.6 62.4,26.3C62,25.1 61.4,24 60.7,22.9C60,21.8 59.3,20.9 58.4,20C57.6,19.1 56.6,18.3 55.7,17.6C54.7,16.9 53.6,16.2 52.5,15.7C51.4,15.2 50.3,14.7 49.1,14.3C48,14 46.8,13.7 45.5,13.5C44.3,13.3 43.1,13.2 41.9,13.2Z" fill="#EE8734" stroke="#141414" stroke-width="1.7" stroke-linejoin="round"/><ellipse cx="17" cy="19.6" rx="12.4" ry="10.2" fill="#EE8734" stroke="#141414" stroke-width="1.6" transform="rotate(-28 17 19.6)"/><ellipse cx="67" cy="19.8" rx="12.4" ry="10.2" fill="#EE8734" stroke="#141414" stroke-width="1.6" transform="rotate(32 67 19.8)"/><path d="M24.6,29.6 L29.6,24 L30,14.4 L23,28Z M59.6,29.8 L54.4,24 L54.4,14.4 L61,28Z" fill="#EE8734"/><ellipse cx="18.1" cy="19.9" rx="9" ry="7.3" fill="#E83397" transform="rotate(-28 18.1 19.9)"/><ellipse cx="65.9" cy="19.9" rx="9" ry="7.3" fill="#E83397" transform="rotate(32 65.9 19.9)"/><path d="M18.6,39.6 L20.4,42.6 M64.8,41.4 L63,43.8" stroke="#141414" stroke-width="1" fill="none"/><path d="M22,72.6 C28,68.6 35,62.6 42,62.3 C49,62.6 56,68.6 62,72.6 C56,67 49,59.8 42,59.4 C35,59.8 28,67 22,72.6Z" fill="#B8692A"/><circle cx="34.8" cy="39.8" r="4.6" fill="#000"/><circle cx="49.6" cy="39.5" r="4.6" fill="#000"/><ellipse cx="34.4" cy="37.7" rx="2" ry="1.8" fill="#fff"/><ellipse cx="49.4" cy="37.8" rx="2" ry="1.8" fill="#fff"/><ellipse cx="42.7" cy="44.3" rx="1.5" ry="1.4" fill="#000"/></svg><svg class="abs" style="left:0;top:0" width="80" height="94" viewBox="0 0 80 94"><path d="M14.5,36.0 h19 l-9.5,15.5Z" fill="#9d9d9d"/></svg><div class="abs name" style="left:134px;top:31.5px;letter-spacing:0.44px">Group</div><div class="abs cb" style="top:28.0px;"><svg width="28" height="28" viewBox="0 0 28 28"><path d="M6.5,14.5 L11.5,20.5 L21.5,6.5" fill="none" stroke="#8c8c8c" stroke-width="2.6"/></svg></div></div><div class="abs row" style="top:609.5px;height:88px;background:#262626"><div class="abs" style="left:0;top:0;width:23px;height:88px;background:linear-gradient(90deg,#2b2b2b,#333 17px,#2b2b2b)"></div><div class="abs" style="left:22px;top:0;width:2px;height:88px;background:#444"></div><div class="abs sep" style="left:23px;top:86px;width:477px"></div><svg class="abs" style="left:63px;top:1.5px" width="84" height="84" viewBox="0 0 84 84"><path d="M23,11 L78.3,44.7 L60.6,73 L5.3,38.6Z" fill="#5d4023"/></svg><div class="abs name" style="left:158.5px;top:31.5px;letter-spacing:0.42px">Rectangle</div><div class="abs cb" style="top:28.0px;background:#222;border-color:#555"></div></div><div class="abs row" style="top:697.5px;height:88px;background:#262626"><div class="abs" style="left:0;top:0;width:23px;height:88px;background:linear-gradient(90deg,#2b2b2b,#333 17px,#2b2b2b)"></div><div class="abs" style="left:22px;top:0;width:2px;height:88px;background:#444"></div><div class="abs sep" style="left:23px;top:86px;width:477px"></div><svg class="abs" style="left:63px;top:1.5px" width="84" height="84" viewBox="0 0 84 84"><path d="M58.8,9.2 L78.3,34.7 L25.8,74.8 L5.3,49.2Z" fill="#5d4023"/></svg><div class="abs name" style="left:158.5px;top:31.5px;letter-spacing:0.42px">Rectangle</div><div class="abs cb" style="top:28.0px;background:#222;border-color:#555"></div></div><div class="abs row" style="top:785.5px;height:88px;background:#262626"><div class="abs" style="left:0;top:0;width:23px;height:88px;background:linear-gradient(90deg,#2b2b2b,#333 17px,#2b2b2b)"></div><div class="abs" style="left:22px;top:0;width:2px;height:88px;background:#444"></div><div class="abs sep" style="left:23px;top:86px;width:477px"></div><svg class="abs" style="left:63px;top:1.5px" width="84" height="84" viewBox="0 0 84 84"><ellipse cx="42" cy="42" rx="37" ry="36" fill="#000"/></svg><div class="abs name" style="left:158.5px;top:31.5px;letter-spacing:0.32px">Ellipse</div><div class="abs cb" style="top:28.0px;"><svg width="28" height="28" viewBox="0 0 28 28"><path d="M6.5,14.5 L11.5,20.5 L21.5,6.5" fill="none" stroke="#8c8c8c" stroke-width="2.6"/></svg></div></div><div class="abs row" style="top:873.5px;height:88px;background:#262626"><div class="abs" style="left:0;top:0;width:23px;height:88px;background:linear-gradient(90deg,#2b2b2b,#333 17px,#2b2b2b)"></div><div class="abs" style="left:22px;top:0;width:2px;height:88px;background:#444"></div><div class="abs sep" style="left:23px;top:86px;width:477px"></div><svg class="abs" style="left:63px;top:1.5px" width="84" height="84" viewBox="0 0 84 84"><ellipse cx="42" cy="42" rx="37" ry="36" fill="#000"/><ellipse cx="42" cy="31" rx="17.4" ry="15" fill="#fff"/></svg><svg class="abs" style="left:0;top:0" width="80" height="94" viewBox="0 0 80 94"><path d="M38.5,37.0 h19 l-9.5,15.5Z" fill="#9d9d9d"/></svg><div class="abs name" style="left:158.5px;top:31.5px;letter-spacing:0.44px">Group</div><div class="abs cb" style="top:28.0px;"><svg width="28" height="28" viewBox="0 0 28 28"><path d="M6.5,14.5 L11.5,20.5 L21.5,6.5" fill="none" stroke="#8c8c8c" stroke-width="2.6"/></svg></div></div><div class="abs row" style="top:961.5px;height:88px;background:#262626"><div class="abs" style="left:0;top:0;width:47px;height:88px;background:linear-gradient(90deg,#2b2b2b,#333 41px,#2b2b2b)"></div><div class="abs" style="left:0;top:0;width:22px;height:88px;background:linear-gradient(90deg,#2a2a2a,#2f2f2f)"></div><div class="abs" style="left:46px;top:0;width:2px;height:88px;background:#444"></div><div class="abs sep" style="left:47px;top:86px;width:453px"></div><svg class="abs" style="left:87px;top:1.5px" width="84" height="84" viewBox="0 0 84 84"><ellipse cx="42" cy="42" rx="37" ry="32.4" fill="#fff"/></svg><div class="abs name" style="left:182.5px;top:31.5px;letter-spacing:0.32px">Ellipse</div><div class="abs cb" style="top:28.0px;"><svg width="28" height="28" viewBox="0 0 28 28"><path d="M6.5,14.5 L11.5,20.5 L21.5,6.5" fill="none" stroke="#8c8c8c" stroke-width="2.6"/></svg></div></div><div class="abs row" style="top:1049.5px;height:88px;background:#262626"><div class="abs" style="left:0;top:0;width:47px;height:88px;background:linear-gradient(90deg,#2b2b2b,#333 41px,#2b2b2b)"></div><div class="abs" style="left:0;top:0;width:22px;height:88px;background:linear-gradient(90deg,#2a2a2a,#2f2f2f)"></div><div class="abs" style="left:46px;top:0;width:2px;height:88px;background:#444"></div><div class="abs sep" style="left:47px;top:86px;width:453px"></div><svg class="abs" style="left:87px;top:1.5px" width="84" height="84" viewBox="0 0 84 84"><ellipse cx="42" cy="42" rx="37" ry="36" fill="#000"/></svg><div class="abs name" style="left:182.5px;top:31.5px;letter-spacing:0.32px">Ellipse</div><div class="abs cb" style="top:28.0px;"><svg width="28" height="28" viewBox="0 0 28 28"><path d="M6.5,14.5 L11.5,20.5 L21.5,6.5" fill="none" stroke="#8c8c8c" stroke-width="2.6"/></svg></div></div><div class="abs row" style="top:1137.5px;height:88px;background:#262626"><div class="abs" style="left:0;top:0;width:23px;height:88px;background:linear-gradient(90deg,#2b2b2b,#333 17px,#2b2b2b)"></div><div class="abs" style="left:22px;top:0;width:2px;height:88px;background:#444"></div><div class="abs sep" style="left:23px;top:86px;width:477px"></div><svg class="abs" style="left:63px;top:1.5px" width="84" height="84" viewBox="0 0 84 84"><ellipse cx="42" cy="42" rx="37" ry="36" fill="#000"/><ellipse cx="39.2" cy="27.6" rx="17.4" ry="15" fill="#fff"/></svg><svg class="abs" style="left:0;top:0" width="80" height="94" viewBox="0 0 80 94"><path d="M38.5,37.0 h19 l-9.5,15.5Z" fill="#9d9d9d"/></svg><div class="abs name" style="left:158.5px;top:31.5px;letter-spacing:0.44px">Group</div><div class="abs cb" style="top:28.0px;"><svg width="28" height="28" viewBox="0 0 28 28"><path d="M6.5,14.5 L11.5,20.5 L21.5,6.5" fill="none" stroke="#8c8c8c" stroke-width="2.6"/></svg></div></div><div class="abs row" style="top:1225.5px;height:88px;background:#262626"><div class="abs" style="left:0;top:0;width:47px;height:88px;background:linear-gradient(90deg,#2b2b2b,#333 41px,#2b2b2b)"></div><div class="abs" style="left:0;top:0;width:22px;height:88px;background:linear-gradient(90deg,#2a2a2a,#2f2f2f)"></div><div class="abs" style="left:46px;top:0;width:2px;height:88px;background:#444"></div><div class="abs sep" style="left:47px;top:86px;width:453px"></div><svg class="abs" style="left:87px;top:1.5px" width="84" height="84" viewBox="0 0 84 84"><ellipse cx="42" cy="42" rx="37" ry="32.4" fill="#fff"/></svg><div class="abs name" style="left:182.5px;top:31.5px;letter-spacing:0.32px">Ellipse</div><div class="abs cb" style="top:28.0px;"><svg width="28" height="28" viewBox="0 0 28 28"><path d="M6.5,14.5 L11.5,20.5 L21.5,6.5" fill="none" stroke="#8c8c8c" stroke-width="2.6"/></svg></div></div><div class="abs row" style="top:1313.5px;height:88px;background:#262626"><div class="abs" style="left:0;top:0;width:47px;height:88px;background:linear-gradient(90deg,#2b2b2b,#333 41px,#2b2b2b)"></div><div class="abs" style="left:0;top:0;width:22px;height:88px;background:linear-gradient(90deg,#2a2a2a,#2f2f2f)"></div><div class="abs" style="left:46px;top:0;width:2px;height:88px;background:#444"></div><div class="abs sep" style="left:47px;top:86px;width:453px"></div><svg class="abs" style="left:87px;top:1.5px" width="84" height="84" viewBox="0 0 84 84"><ellipse cx="42" cy="42" rx="37" ry="36" fill="#000"/></svg><div class="abs name" style="left:182.5px;top:31.5px;letter-spacing:0.32px">Ellipse</div><div class="abs cb" style="top:28.0px;"><svg width="28" height="28" viewBox="0 0 28 28"><path d="M6.5,14.5 L11.5,20.5 L21.5,6.5" fill="none" stroke="#8c8c8c" stroke-width="2.6"/></svg></div></div><div class="abs row" style="top:1401.5px;height:88px;background:#262626"><div class="abs" style="left:0;top:0;width:23px;height:88px;background:linear-gradient(90deg,#2b2b2b,#333 17px,#2b2b2b)"></div><div class="abs" style="left:22px;top:0;width:2px;height:88px;background:#444"></div><div class="abs sep" style="left:23px;top:86px;width:477px"></div><svg class="abs" style="left:63px;top:1.5px" width="84" height="84" viewBox="0 0 84 84"><path d="M8.4,32.6C9.9,31.9 11.4,31.1 12.9,30.3C14.4,29.6 15.8,28.7 17.3,27.9C18.7,27 20.1,26.2 21.6,25.3C23,24.4 24.4,23.6 25.8,22.7C27.2,21.8 28.6,20.9 30.1,20.1C31.5,19.2 32.9,18.4 34.4,17.6C35.8,16.8 37.3,16 38.7,15.2C40.2,14.5 41.7,13.8 43.3,13.1C44.8,12.5 46.4,11.8 47.9,11.3C49.5,10.8 51.2,10.3 52.8,9.9C54.5,9.5 56.3,9.1 58,8.9C59.8,8.6 61.6,8.5 63.3,8.5C65.1,8.5 66.8,8.6 68.4,9C70,9.4 71.4,10 72.7,10.9C73.9,11.8 74.8,13 75.5,14.4C76.2,15.8 76.6,17.3 76.7,18.8C76.8,20.3 76.6,21.8 76.2,23.2C75.8,24.8 75.1,26.2 74.4,27.6C73.5,29.1 72.5,30.5 71.5,31.9C70.3,33.3 69.1,34.7 67.8,36C66.6,37.3 65.2,38.6 63.8,39.8C62.5,41 61.1,42.2 59.7,43.3C58.4,44.4 57,45.5 55.7,46.5C54.3,47.5 53,48.5 51.7,49.5C50.4,50.5 49,51.4 47.7,52.4C46.4,53.3 45.1,54.2 43.9,55.2C42.6,56.1 41.3,57 40,58C38.8,58.9 37.5,59.9 36.3,60.9C35.1,61.9 33.9,63 32.7,64.1C31.5,65.2 30.3,66.3 29.1,67.5C27.9,68.7 26.8,70 25.7,71.3C24.5,72.6 23.4,74.1 22.3,75.5L19,69.4C17.9,67 16.8,64.6 15.8,62.1C12.1,52.7 10.2,42.7 8.4,32.6Z" fill="#000"/><path d="M72.3,16.5C72.2,18.2 72,19.9 71.7,21.6C71.3,23.2 70.7,24.7 70,26.2C69.4,27.7 68.5,29.1 67.6,30.5C66.7,31.9 65.7,33.2 64.6,34.5C63.5,35.7 62.3,37 61,38.1C59.8,39.3 58.5,40.5 57.2,41.6C55.8,42.7 54.5,43.8 53.1,44.9C51.7,46 50.3,47 48.8,48C47.4,49.1 45.9,50.1 44.5,51.1C43,52.1 41.5,53 40.1,54C38.6,55 37.1,56 35.6,56.9C34.2,57.9 32.7,58.9 31.3,59.8C29.8,60.8 28.4,61.8 27,62.7C25.6,63.7 24.2,64.7 22.9,65.7C21.6,66.7 20.3,67.8 19,68.8L17.4,62.9L15.8,62.1L15.8,58C17.1,56.8 18.3,55.5 19.6,54.3C20.9,53 22.1,51.8 23.4,50.5C24.6,49.2 25.9,48 27.2,46.7C28.5,45.5 29.8,44.2 31.1,43C32.3,41.7 33.7,40.5 35,39.3C36.3,38.1 37.6,36.8 39,35.7C40.3,34.5 41.6,33.3 43,32.1C44.4,31 45.8,29.9 47.2,28.8C48.6,27.7 50,26.6 51.5,25.6C52.9,24.5 54.4,23.5 55.9,22.5C57.4,21.6 58.9,20.6 60.4,19.8C62,18.9 63.5,18 65.1,17.2C66.7,16.4 68.4,15.7 70,15Z" fill="#B8692A"/><path d="M8.9,33.2C10.5,32.4 12,31.7 13.5,30.9C15.1,30.1 16.5,29.3 18,28.4C19.5,27.6 20.9,26.8 22.4,25.9C23.8,25.1 25.2,24.2 26.6,23.4C28.1,22.6 29.5,21.8 30.9,21C32.4,20.2 33.8,19.4 35.3,18.6C36.7,17.8 38.2,17.1 39.7,16.4C41.2,15.7 42.7,15.1 44.3,14.4C45.9,13.8 47.5,13.2 49.1,12.7C50.8,12.2 52.5,11.7 54.2,11.3C56,10.9 57.8,10.6 59.6,10.3C61.4,10.1 63.2,9.9 65.1,10C66.6,10.1 68.2,10.4 69.4,11.3C70.4,12.1 71.1,13.5 71.4,14.9C71.7,16.4 71.6,18 71.2,19.5C70.9,21 70.3,22.4 69.5,23.7C68.6,25.1 67.6,26.4 66.5,27.6C65.3,28.9 64,30.1 62.6,31.3C61.2,32.5 59.8,33.6 58.3,34.7C56.8,35.8 55.3,36.8 53.8,37.9C52.3,38.9 50.9,39.9 49.4,40.9C48.1,41.9 46.7,42.9 45.3,43.8C43.9,44.7 42.6,45.7 41.2,46.6C39.9,47.5 38.6,48.4 37.2,49.2C35.9,50.1 34.6,51 33.2,51.8C31.9,52.7 30.5,53.6 29.1,54.4C27.7,55.3 26.3,56.1 24.9,57C23.4,57.8 22,58.7 20.5,59.5C18.9,60.4 17.4,61.2 15.8,62.1L15.8,62.1L8.9,33.2Z" fill="#EE8734"/></svg><svg class="abs" style="left:0;top:0" width="80" height="94" viewBox="0 0 80 94"><path d="M40.5,34.0 v19 l16,-9.5Z" fill="#9d9d9d"/></svg><div class="abs sub" style="left:158.5px;top:16.5px;color:#7d7d7d">Group</div><div class="abs name" style="left:158.5px;top:43.0px;color:#b0b0b0;letter-spacing:0.84px">right arm</div><div class="abs cb" style="top:28.0px;"><svg width="28" height="28" viewBox="0 0 28 28"><path d="M6.5,14.5 L11.5,20.5 L21.5,6.5" fill="none" stroke="#8c8c8c" stroke-width="2.6"/></svg></div></div><div class="abs row" style="top:1489.5px;height:88px;background:#262626"><div class="abs" style="left:0;top:0;width:23px;height:88px;background:linear-gradient(90deg,#2b2b2b,#333 17px,#2b2b2b)"></div><div class="abs" style="left:22px;top:0;width:2px;height:88px;background:#444"></div><div class="abs sep" style="left:23px;top:86px;width:477px"></div><svg class="abs" style="left:63px;top:1.5px" width="84" height="84" viewBox="0 0 84 84"><path d="M75.6,31.6C74.1,30.9 72.7,30.2 71.2,29.4C69.8,28.7 68.3,27.8 66.8,27C65.3,26.1 63.8,25.3 62.4,24.4C60.8,23.5 59.3,22.6 57.8,21.7C56.3,20.8 54.7,19.9 53.2,19.1C51.6,18.2 50.1,17.4 48.5,16.6C46.9,15.8 45.3,15.1 43.7,14.4C42,13.7 40.4,13.1 38.7,12.6C37.1,12.1 35.4,11.6 33.7,11.2C32,10.9 30.3,10.6 28.6,10.5C26.8,10.4 25.1,10.3 23.3,10.5C21.5,10.6 19.8,10.8 18,11.2C16.4,11.6 14.7,12.2 13.2,13C11.8,13.7 10.5,14.7 9.5,15.9C8.4,17.1 7.7,18.5 7.3,20.1C6.9,21.7 6.8,23.4 6.9,25C6.9,26.7 7.2,28.3 7.7,29.8C8.2,31.4 8.8,32.9 9.6,34.4C10.5,35.9 11.4,37.3 12.5,38.6C13.5,40 14.7,41.3 16,42.6C17.3,43.9 18.6,45.1 20,46.3C21.4,47.5 22.9,48.7 24.4,49.8C25.9,50.9 27.4,51.9 28.9,53C30.4,54 31.9,55 33.4,56C34.8,56.9 36.3,57.8 37.7,58.7C39.1,59.6 40.4,60.5 41.8,61.3C43.1,62.2 44.5,63.1 45.8,64C47.1,64.9 48.5,65.8 49.8,66.8C51.2,67.8 52.5,68.8 53.8,69.9C55.3,71 56.7,72.2 58.1,73.4L61.3,67.3C62.4,65.5 63.6,63.8 64.6,62C70,52.7 72.8,42.1 75.6,31.6Z" fill="#000"/><path d="M12.1,22.9C12.3,24.7 12.4,26.5 12.8,28.3C13.2,30 13.8,31.6 14.5,33.2C15.2,34.7 16.1,36.1 17.1,37.5C18.1,38.9 19.2,40.2 20.4,41.4C21.6,42.7 22.9,43.9 24.2,45C25.6,46.1 27,47.2 28.5,48.2C30,49.3 31.6,50.3 33.2,51.2C34.7,52.2 36.3,53.1 38,54C39.6,55 41.2,55.8 42.9,56.7C44.5,57.6 46.1,58.5 47.7,59.3C49.3,60.2 50.9,61 52.5,61.9C54,62.7 55.6,63.6 57.1,64.5C58.5,65.4 59.9,66.3 61.3,67.2L63,62.8L64.6,62L64.6,58C63,57.2 61.5,56.4 60,55.5C58.5,54.6 57,53.6 55.7,52.6C54.3,51.6 52.9,50.5 51.6,49.4C50.2,48.2 48.9,47.1 47.7,45.9C46.4,44.7 45.1,43.5 43.9,42.3C42.6,41.1 41.3,39.9 40.1,38.7C38.8,37.5 37.5,36.3 36.2,35.2C35,34 33.6,32.9 32.3,31.8C31,30.7 29.6,29.7 28.2,28.7C26.8,27.7 25.3,26.8 23.8,26C22.3,25.1 20.7,24.3 19.1,23.7C17.4,23 15.7,22.5 14,22Z" fill="#B8692A"/><path d="M74.8,32.7C73.3,31.9 71.8,31.2 70.3,30.4C68.8,29.6 67.3,28.7 65.9,27.8C64.4,27 62.9,26.1 61.4,25.2C59.9,24.4 58.5,23.5 56.9,22.7C55.4,21.8 53.9,21 52.4,20.2C50.9,19.4 49.3,18.7 47.7,18C46.1,17.3 44.5,16.6 42.9,16.1C41.3,15.5 39.6,15 37.9,14.6C36.2,14.2 34.5,13.9 32.7,13.7C30.9,13.5 29.1,13.4 27.2,13.5C25.4,13.5 23.6,13.7 21.8,14C20.2,14.4 18.6,14.8 17.1,15.7C15.8,16.4 14.7,17.4 13.9,18.6C13.1,19.8 12.7,21.3 12.7,22.7C12.6,24.3 13,25.9 13.6,27.4C14.3,29.1 15.2,30.7 16.2,32.2C17.3,33.7 18.5,35.1 19.8,36.5C21.1,37.7 22.5,38.9 23.9,39.9C25.4,41 26.8,41.9 28.4,42.8C29.8,43.6 31.4,44.5 32.9,45.3C34.4,46.1 35.9,46.9 37.4,47.7C38.9,48.6 40.4,49.4 41.9,50.2C43.3,51 44.8,51.8 46.3,52.6C47.8,53.4 49.3,54.2 50.7,55C52.2,55.8 53.7,56.6 55.3,57.4C56.8,58.2 58.3,59 59.9,59.7C61.4,60.5 63,61.3 64.6,62L64.6,62L74.8,32.7Z" fill="#EE8734"/></svg><svg class="abs" style="left:0;top:0" width="80" height="94" viewBox="0 0 80 94"><path d="M40.5,34.0 v19 l16,-9.5Z" fill="#9d9d9d"/></svg><div class="abs sub" style="left:158.5px;top:16.5px;color:#7d7d7d">Group</div><div class="abs name" style="left:158.5px;top:43.0px;color:#b0b0b0;letter-spacing:0.84px">left arm</div><div class="abs cb" style="top:28.0px;"><svg width="28" height="28" viewBox="0 0 28 28"><path d="M6.5,14.5 L11.5,20.5 L21.5,6.5" fill="none" stroke="#8c8c8c" stroke-width="2.6"/></svg></div></div><div class="abs row" style="top:1577.5px;height:88px;background:#262626"><div class="abs" style="left:0;top:0;width:23px;height:88px;background:linear-gradient(90deg,#2b2b2b,#333 17px,#2b2b2b)"></div><div class="abs" style="left:22px;top:0;width:2px;height:88px;background:#444"></div><div class="abs sep" style="left:23px;top:86px;width:477px"></div><svg class="abs" style="left:63px;top:1.5px" width="84" height="84" viewBox="0 0 84 84"><path d="M9.5,63.5C9.7,62.1 9.8,60.6 10,59.2C10.2,57.6 10.3,56 10.4,54.3C10.6,52.6 10.7,50.9 10.9,49.2C11.1,47.4 11.3,45.6 11.5,43.8C11.7,42 12,40.1 12.3,38.3C12.6,36.5 12.9,34.7 13.3,32.9C13.7,31.2 14.2,29.4 14.7,27.7C15.2,26.1 15.8,24.4 16.5,22.8C17.2,21.3 18,19.8 18.9,18.4C19.7,17.1 20.7,15.8 21.8,14.6C22.9,13.5 24.1,12.5 25.4,11.6C26.7,10.7 28.2,10 29.6,9.4C31.1,8.8 32.7,8.3 34.3,8C35.9,7.6 37.6,7.5 39.3,7.4C40.9,7.4 42.6,7.5 44.3,7.8C46,8 47.6,8.4 49.2,9C50.8,9.5 52.4,10.2 53.9,11C55.4,11.9 56.9,12.8 58.2,13.9C59.6,15 60.9,16.2 62.2,17.4C63.4,18.7 64.6,20 65.8,21.4C66.9,22.8 68,24.2 69,25.7C70.1,27.1 71,28.6 71.9,30.2C72.7,31.7 73.5,33.2 74.1,34.8C74.8,36.4 75.3,38 75.7,39.6C76.1,41.2 76.4,42.8 76.5,44.4C76.6,46 76.6,47.6 76.4,49.2C76.1,50.8 75.7,52.4 75.2,53.9C74.6,55.4 73.8,56.9 73,58.4C72.1,59.8 71.1,61.2 70,62.5C68.9,63.8 67.7,65 66.4,66.1C65.1,67.2 63.7,68.2 62.3,69.2C60.9,70.1 59.4,70.9 57.9,71.7C56.3,72.4 54.8,73.1 53.2,73.7C51.5,74.3 49.9,74.8 48.2,75.3C46.5,75.8 44.8,76.2 43.1,76.5C41.4,76.9 39.7,77.2 38,77.5C36.3,77.7 34.6,77.9 32.9,78.1C31.2,78.3 29.5,78.4 27.9,78.5C26.2,78.6 24.6,78.7 22.9,78.8C21.3,78.8 19.6,78.8 18,78.8L16.8,74.5L9.5,63.5Z" fill="#000"/><path d="M10.7,63.5C10.9,62.1 11,60.6 11.2,59.2C11.3,57.6 11.5,56 11.6,54.4C11.8,52.7 12,51 12.2,49.3C12.4,47.5 12.6,45.7 12.8,43.9C13.1,42.1 13.4,40.3 13.8,38.5C14.1,36.7 14.5,35 15,33.2C15.4,31.5 15.9,29.8 16.6,28.1C17.1,26.5 17.8,25 18.6,23.4C19.4,22 20.2,20.6 21.2,19.3C22.1,18 23.2,16.8 24.4,15.8C25.6,14.8 26.9,13.9 28.3,13.2C29.7,12.4 31.2,11.8 32.7,11.4C34.3,10.9 35.9,10.6 37.5,10.5C39.1,10.4 40.7,10.4 42.4,10.6C44,10.8 45.6,11.1 47.2,11.7C48.8,12.2 50.4,12.9 51.8,13.7C53.3,14.6 54.7,15.6 56.1,16.7C57.5,17.8 58.8,19.1 60,20.3C61.2,21.6 62.4,23 63.5,24.4C64.7,25.8 65.7,27.3 66.7,28.8C67.6,30.2 68.5,31.8 69.3,33.3C70,34.8 70.6,36.4 71.1,38C71.6,39.5 71.9,41.1 72.1,42.7C72.2,44.3 72.2,45.8 72,47.4C71.8,49 71.3,50.5 70.7,52C70.1,53.5 69.2,55 68.3,56.3C67.3,57.7 66.2,59 65.1,60.2C63.9,61.4 62.6,62.5 61.2,63.5C59.9,64.5 58.4,65.3 56.9,66.1C55.4,66.9 53.9,67.6 52.3,68.2C50.7,68.8 49.1,69.4 47.4,69.8C45.7,70.3 44,70.7 42.3,71.1C40.6,71.4 38.9,71.7 37.2,72C35.5,72.2 33.8,72.4 32.1,72.6C30.5,72.8 28.8,72.9 27.2,73.1C25.5,73.2 23.9,73.3 22.3,73.4C20.6,73.5 19,73.6 17.4,73.7L17.4,73.7L10.7,63.5Z" fill="#EE8734"/><path d="M16.2,58C16.1,56.5 16,55 16,53.5C16,51.8 16,50.1 16.2,48.4C16.3,46.6 16.4,44.7 16.7,42.9C17,41.1 17.3,39.2 17.8,37.4C18.2,35.6 18.8,33.8 19.5,32.1C20.1,30.4 20.9,28.8 21.9,27.3C22.8,25.9 23.8,24.6 25.1,23.4C26.3,22.3 27.6,21.4 29.1,20.6C30.5,19.9 32,19.4 33.6,19.2C35.2,18.9 36.9,19 38.5,19.2C40.2,19.4 41.8,19.9 43.4,20.5C45,21.2 46.6,22.1 48.1,23C49.7,24.1 51.2,25.2 52.5,26.5C53.9,27.7 55.1,29.1 56.3,30.6C57.4,32.1 58.4,33.6 59.2,35.2C60,36.8 60.6,38.4 61.1,40.1C61.5,41.7 61.8,43.4 61.9,45.1C61.9,46.6 61.8,48.2 61.4,49.8C61.1,51.3 60.5,52.8 59.7,54.1C58.8,55.5 57.8,56.7 56.6,57.8C55.3,59 53.9,59.9 52.4,60.8C50.8,61.7 49.1,62.5 47.4,63.1C45.7,63.8 44,64.4 42.2,64.8C40.4,65.3 38.7,65.7 36.9,66C35.1,66.3 33.4,66.6 31.6,66.8C29.9,67 28.2,67.1 26.5,67.3C24.9,67.4 23.3,67.5 21.7,67.6L21.7,67.6L16.2,58Z" fill="#E83397"/></svg><svg class="abs" style="left:0;top:0" width="80" height="94" viewBox="0 0 80 94"><path d="M40.5,34.0 v19 l16,-9.5Z" fill="#9d9d9d"/></svg><div class="abs sub" style="left:158.5px;top:16.5px;color:#7d7d7d">Group</div><div class="abs name" style="left:158.5px;top:43.0px;color:#b0b0b0;letter-spacing:0.77px">right ear</div><div class="abs cb" style="top:28.0px;"><svg width="28" height="28" viewBox="0 0 28 28"><path d="M6.5,14.5 L11.5,20.5 L21.5,6.5" fill="none" stroke="#8c8c8c" stroke-width="2.6"/></svg></div></div><div class="abs row" style="top:1665.5px;height:88px;background:#262626"><div class="abs" style="left:0;top:0;width:23px;height:88px;background:linear-gradient(90deg,#2b2b2b,#333 17px,#2b2b2b)"></div><div class="abs" style="left:22px;top:0;width:2px;height:88px;background:#444"></div><div class="abs sep" style="left:23px;top:86px;width:477px"></div><svg class="abs" style="left:63px;top:1.5px" width="84" height="84" viewBox="0 0 84 84"><path d="M62.6,78.7C61,78.3 59.5,77.9 57.9,77.5C56.3,77.2 54.6,76.8 53,76.5C51.4,76.2 49.7,75.9 48,75.6C46.4,75.3 44.7,75 43,74.6C41.4,74.3 39.7,73.9 38.1,73.5C36.4,73 34.8,72.6 33.2,72C31.5,71.5 29.9,70.9 28.4,70.2C26.8,69.5 25.3,68.7 23.8,67.8C22.3,66.9 20.9,65.9 19.5,64.8C18.1,63.8 16.8,62.6 15.6,61.3C14.3,60.1 13.2,58.8 12.2,57.4C11.2,56 10.3,54.6 9.5,53.1C8.8,51.7 8.2,50.2 7.8,48.6C7.4,47.1 7.1,45.6 7.1,44.1C7,42.5 7.2,41 7.5,39.5C7.9,38 8.4,36.5 9.1,35.1C9.8,33.6 10.6,32.1 11.5,30.8C12.5,29.3 13.5,27.9 14.7,26.6C15.8,25.3 17.1,24 18.4,22.8C19.7,21.5 21,20.3 22.4,19.2C23.8,18.1 25.2,17 26.7,16C28.1,15 29.6,14.1 31.1,13.2C32.6,12.4 34.1,11.6 35.7,10.9C37.3,10.3 38.9,9.7 40.5,9.2C42.1,8.7 43.8,8.3 45.4,8.1C47.1,7.8 48.8,7.7 50.4,7.7C52,7.7 53.6,7.8 55.2,8.1C56.8,8.4 58.3,8.9 59.7,9.5C61.2,10.1 62.6,10.9 63.8,11.9C65.1,12.9 66.3,14 67.3,15.2C68.4,16.5 69.4,17.9 70.2,19.3C71.1,20.8 71.9,22.3 72.5,23.9C73.2,25.5 73.7,27.2 74.2,28.8C74.6,30.5 75,32.2 75.3,34C75.6,35.7 75.8,37.5 75.9,39.3C76.1,41 76.1,42.8 76.1,44.5C76.1,46.2 76.1,48 76,49.7C75.9,51.3 75.7,53 75.5,54.6C75.3,56.1 75.1,57.7 74.8,59.2L74.8,59.2C69.7,63.6 64.6,67.9 63.2,73.8C62.8,75.4 62.7,77 62.6,78.7Z" fill="#000"/><path d="M63.8,73.2C62.2,72.8 60.7,72.4 59.1,72.1C57.5,71.7 55.9,71.4 54.2,71.1C52.6,70.8 50.9,70.6 49.3,70.3C47.6,70 45.9,69.7 44.2,69.4C42.5,69.1 40.8,68.8 39.2,68.4C37.5,68 35.8,67.5 34.2,67C32.6,66.5 31,65.9 29.4,65.2C27.8,64.5 26.3,63.7 24.8,62.8C23.3,61.9 21.8,60.9 20.5,59.8C19.1,58.6 17.8,57.4 16.6,56.1C15.5,54.9 14.5,53.5 13.6,52.1C12.7,50.7 12,49.2 11.5,47.7C11.1,46.3 10.8,44.8 10.7,43.3C10.7,41.8 10.9,40.3 11.3,38.8C11.8,37.3 12.4,35.9 13.2,34.5C14,33 14.9,31.6 16,30.3C17.1,28.9 18.3,27.6 19.5,26.3C20.8,25.1 22.2,23.8 23.6,22.7C25,21.5 26.4,20.4 27.8,19.4C29.3,18.3 30.7,17.4 32.2,16.5C33.7,15.6 35.2,14.8 36.8,14.1C38.4,13.4 40,12.7 41.6,12.2C43.2,11.7 44.8,11.4 46.5,11.1C48.1,10.9 49.8,10.7 51.4,10.8C53,10.8 54.6,11 56.1,11.4C57.6,11.8 59.1,12.4 60.4,13.2C61.8,14 63.1,15 64.2,16.2C65.4,17.3 66.4,18.7 67.4,20C68.3,21.5 69.1,23 69.8,24.5C70.5,26.1 71.1,27.7 71.6,29.4C72.1,31 72.5,32.7 72.8,34.5C73.1,36.2 73.4,37.9 73.6,39.7C73.7,41.4 73.9,43.2 73.9,45C74,46.7 74,48.4 74,50.1C74,51.8 74,53.5 74,55.1C73.9,56.7 73.9,58.2 73.8,59.8L73.8,59.8L63.8,73.2Z" fill="#EE8734"/><path d="M59.9,68.3C58.5,67.9 57.1,67.6 55.6,67.2C54,66.9 52.4,66.5 50.8,66.2C49.1,65.9 47.4,65.5 45.7,65.1C43.9,64.7 42.2,64.2 40.4,63.8C38.7,63.3 37,62.7 35.3,62C33.6,61.4 31.9,60.7 30.4,59.9C28.8,59 27.4,58.1 26,57C24.7,56 23.4,54.9 22.4,53.6C21.4,52.3 20.6,51 20,49.5C19.4,48.1 19.2,46.7 19.1,45.2C19,43.6 19.2,42.1 19.6,40.6C20,39 20.6,37.5 21.3,36.1C22.1,34.5 23,33.1 24.1,31.7C25.1,30.3 26.3,28.9 27.6,27.7C28.9,26.4 30.3,25.2 31.8,24.2C33.3,23.1 34.8,22.2 36.5,21.4C38,20.6 39.7,19.9 41.4,19.4C43,18.9 44.7,18.6 46.3,18.4C47.9,18.2 49.6,18.3 51.2,18.5C52.7,18.7 54.2,19.1 55.7,19.8C57.1,20.4 58.4,21.3 59.6,22.3C60.9,23.4 62,24.6 63,26C64,27.4 64.8,28.8 65.6,30.4C66.3,32 67,33.6 67.5,35.3C68,37 68.4,38.8 68.7,40.5C68.9,42.3 69.1,44 69.2,45.8C69.3,47.5 69.3,49.2 69.2,50.9C69.1,52.4 68.9,54 68.7,55.5L68.7,55.5L59.9,68.3Z" fill="#E83397"/></svg><svg class="abs" style="left:0;top:0" width="80" height="94" viewBox="0 0 80 94"><path d="M40.5,34.0 v19 l16,-9.5Z" fill="#9d9d9d"/></svg><div class="abs sub" style="left:158.5px;top:16.5px;color:#7d7d7d">Group</div><div class="abs name" style="left:158.5px;top:43.0px;color:#b0b0b0;letter-spacing:0.77px">left ear</div><div class="abs cb" style="top:28.0px;"><svg width="28" height="28" viewBox="0 0 28 28"><path d="M6.5,14.5 L11.5,20.5 L21.5,6.5" fill="none" stroke="#8c8c8c" stroke-width="2.6"/></svg></div></div><div class="abs row" style="top:1753.5px;height:88px;background:#262626"><div class="abs" style="left:0;top:0;width:23px;height:88px;background:linear-gradient(90deg,#2b2b2b,#333 17px,#2b2b2b)"></div><div class="abs" style="left:22px;top:0;width:2px;height:88px;background:#444"></div><div class="abs sep" style="left:23px;top:86px;width:477px"></div><svg class="abs" style="left:63px;top:1.5px" width="84" height="84" viewBox="0 0 84 84"><path d="M41.7,5.5C40.4,5.6 39.2,5.7 37.9,5.9C36.7,6.1 35.5,6.4 34.3,6.7C33.1,7.1 31.9,7.5 30.8,8C29.7,8.5 28.7,9 27.7,9.6C26.7,10.3 25.7,11 24.8,11.7C23.9,12.5 23.1,13.3 22.3,14.2C21.5,15.2 20.8,16.2 20.2,17.2C19.6,18.3 19,19.4 18.6,20.5C18.1,21.7 17.6,22.9 17.3,24.1C16.9,25.4 16.5,26.6 16.2,27.9C15.9,29.2 15.6,30.4 15.4,31.7C15.1,33 14.9,34.2 14.7,35.4C14.5,36.6 14.3,37.9 14.1,39.1C13.9,40.2 13.7,41.4 13.5,42.6C13.3,43.8 13.1,45 12.9,46.1C12.7,47.3 12.5,48.5 12.3,49.7C12,50.9 11.8,52.1 11.5,53.3C11.2,54.5 11,55.7 10.6,57C10.3,58.2 10,59.5 9.6,60.8C9.2,62.1 8.9,63.4 8.6,64.8C8.3,66 8,67.3 8,68.6C7.9,69.8 8,71.1 8.2,72.3C8.5,73.4 9,74.5 9.8,75.5C10.5,76.3 11.5,77 12.5,77.2C13.5,77.4 14.6,77 15.6,76.6C16.8,76.1 17.8,75.6 18.9,74.9C20,74.3 21.1,73.6 22.2,72.8C23.3,72.1 24.4,71.3 25.4,70.5C26.5,69.7 27.6,68.9 28.7,68.1C29.8,67.4 30.9,66.6 32,65.9C33.1,65.3 34.2,64.7 35.3,64.1C36.4,63.6 37.5,63.2 38.6,62.9C39.7,62.6 40.8,62.4 41.9,62.4C43,62.5 44.1,62.6 45.2,62.9C46.3,63.2 47.4,63.6 48.5,64.1C49.6,64.7 50.7,65.3 51.8,66C52.9,66.6 54,67.4 55.1,68.1C56.2,68.9 57.3,69.7 58.4,70.5C59.4,71.3 60.5,72.1 61.6,72.9C62.7,73.6 63.8,74.3 64.9,75C66,75.7 67,76.3 68.2,76.7C69.2,77.1 70.3,77.4 71.3,77.2C72.3,77 73.3,76.2 74,75.3C74.7,74.3 75.2,73.2 75.5,72C75.8,70.8 75.8,69.6 75.7,68.4C75.6,67.1 75.4,65.9 75.1,64.7C74.8,63.4 74.4,62.1 74.1,60.9C73.7,59.6 73.4,58.4 73,57.1C72.7,55.8 72.4,54.6 72.2,53.3C71.9,52.1 71.7,50.8 71.5,49.6C71.2,48.3 71,47.1 70.8,45.8C70.6,44.6 70.5,43.4 70.3,42.1C70.1,40.9 69.9,39.7 69.7,38.5C69.5,37.3 69.3,36.1 69,34.9C68.8,33.7 68.6,32.6 68.3,31.4C68,30.2 67.7,29 67.4,27.9C67.1,26.7 66.7,25.6 66.3,24.5C65.9,23.3 65.4,22.2 64.9,21.1C64.4,20 63.9,18.9 63.3,17.9C62.7,16.8 62,15.7 61.3,14.7C60.6,13.6 59.8,12.6 58.9,11.7C58.1,10.8 57.2,9.9 56.2,9.1C55.2,8.4 54.1,7.8 52.9,7.2C51.8,6.7 50.6,6.4 49.4,6.1C48.1,5.8 46.8,5.6 45.6,5.5C44.3,5.4 43,5.4 41.7,5.5Z" fill="#EE8734" stroke="#151515" stroke-width="1.6"/><path d="M17.4,75.6 C24,71.6 33,61.6 41.8,61.2 C50.6,61.6 60,71.6 66.3,75.6 C60,70.6 50.6,58.2 41.8,57.8 C33,58.2 24,70.6 17.4,75.6Z" fill="#B8692A"/></svg><svg class="abs" style="left:0;top:0" width="80" height="94" viewBox="0 0 80 94"><path d="M40.5,34.0 v19 l16,-9.5Z" fill="#9d9d9d"/></svg><div class="abs sub" style="left:158.5px;top:16.5px;color:#7d7d7d">Group</div><div class="abs name" style="left:158.5px;top:43.0px;color:#b0b0b0;letter-spacing:1.1px">body</div><div class="abs cb" style="top:28.0px;"><svg width="28" height="28" viewBox="0 0 28 28"><path d="M6.5,14.5 L11.5,20.5 L21.5,6.5" fill="none" stroke="#8c8c8c" stroke-width="2.6"/></svg></div></div><div class="abs" style="left:0;top:1841.5px;width:500px;height:8px;background:#2d2d2d"></div></div>
<div id="rightbar" class="abs" style=""><svg class="abs txt" style="left:0px;top:0px" width="74" height="2732" viewBox="1974 0 74 2732"><rect x="1996.9" y="22.5" width="28.3" height="28.6" fill="none" stroke="#e0e0e0" stroke-width="1.7"/><path d="M2002.8,36.6 V28.6 H2010.6 M2019.3,36.9 V44.7 H2011.3" fill="none" stroke="#e0e0e0" stroke-width="1.7"/><circle cx="2010.9" cy="120.9" r="24.9" fill="#EE8734" stroke="#5c5c5c" stroke-width="1.8"/><path d="M1988.4,216.6 C1992,208 1998,200 2005.2,195.2 C2012,191 2018,190 2022.8,187 C2027,184.5 2030,181.5 2032.4,179 C2033.4,178.6 2034,179.6 2033.6,181 C2032,186 2029.5,190 2025.5,193.1 C2020,197 2013,199.5 2007.9,202 C2001,205.5 1995,211.5 1989.8,218 C1989,218.6 1988,217.8 1988.4,216.6Z" fill="#050505" stroke="#585858" stroke-width="0.9"/><text x="2011.6" y="254.3" font-size="15.8" fill="#bababa" text-anchor="middle" letter-spacing="1.7">0pt</text><rect x="1981" y="280" width="60" height="2.8" fill="#343434"/><path d="M2000.2,332.6 C2003.5,329.5 2005.6,324.6 2009.6,320.6 C2011.8,318.6 2014,318.4 2015.4,319.6 C2017.4,321.4 2017.8,324.4 2016,327.4 C2013.4,331.8 2007,333.4 2000.2,332.6Z" fill="#5c5c5c"/><path d="M2013.4,319.6 L2019.6,312.6 L2024.8,315.6 L2017,322.6Z" fill="#6c6c6c"/><path d="M1994.6,336.2 C1999,341 2004.5,343.2 2009.5,342.6 C2015,342 2018.5,337.6 2023.2,336.4 C2026,335.8 2028.2,336.8 2029.6,338.2 C2027.6,337.6 2025.6,337.6 2023.4,338.4 C2019,340.2 2015.5,345.6 2009.6,346.6 C2003,347.6 1996,344 1991.6,339Z" fill="#3e3e3e"/><path d="M1996.1,402.7 L2012.5,395.6 L2025.9,401.2 L2009.5,410.2Z M2001.6,402.7 L2009.5,406.2 L2021,401.6 L2012.5,398.6Z" fill="#fafafa" fill-rule="evenodd"/><path d="M1996.1,407.9 L2009.5,413.8 L2025.9,406.4 V410.2 L2009.5,417.6 L1996.1,411.7Z" fill="#858585"/><path d="M1996.1,414.6 L2009.5,420.5 L2025.9,413.1 V416.9 L2009.5,424.3 L1996.1,418.4Z" fill="#fafafa"/><path d="M1996.1,421.3 L2009.5,427.2 L2025.9,419.8 V423.6 L2009.5,431 L1996.1,425.1Z" fill="#fafafa"/><rect x="2041.9" y="384.7" width="4.2" height="54.2" fill="#3a7fd5"/><rect x="1993.4" y="476.6" width="35.3" height="34.9" rx="8.5" fill="none" stroke="#5c5c5c" stroke-width="2.4" stroke-dasharray="4.8 3.3" stroke-dashoffset="1"/><rect x="1997.9" y="480.7" width="26.4" height="26.4" rx="6.5" fill="#4f4f4f"/><rect x="1992.9" y="558.1" width="10.1" height="10.1" fill="#5e5e5e"/><rect x="2005.9" y="558.1" width="10.1" height="10.1" fill="#5e5e5e"/><rect x="2018.9" y="558.1" width="10.1" height="10.1" fill="#5e5e5e"/><rect x="1992.9" y="571.1" width="10.1" height="10.1" fill="#5e5e5e"/><rect x="2005.9" y="571.1" width="10.1" height="10.1" fill="#5e5e5e"/><rect x="2018.9" y="571.1" width="10.1" height="10.1" fill="#5e5e5e"/><rect x="1992.9" y="584.1" width="10.1" height="10.1" fill="#5e5e5e"/><rect x="2005.9" y="584.1" width="10.1" height="10.1" fill="#5e5e5e"/><rect x="2018.9" y="584.1" width="10.1" height="10.1" fill="#5e5e5e"/><rect x="1994" y="641" width="34" height="34" fill="none" stroke="#5e5e5e" stroke-width="1.8"/><path d="M1994.2,664.8 L2007.6,651.3 L2022.5,667.4 L2028,662.2 M2016.4,659.6 L2028,650.6" fill="none" stroke="#5e5e5e" stroke-width="1.7"/><circle cx="2017" cy="647.2" r="3.8" fill="#5e5e5e"/><circle cx="2011" cy="740.1" r="16.8" fill="none" stroke="#5e5e5e" stroke-width="1.8"/><g fill="#5e5e5e"><path d="M2009.4,741.8 C2013,739 2016.6,735 2017.2,730 C2017.5,727.5 2017,725.4 2016,723.7 L2017.8,723.3 C2019.5,726 2020.2,729.4 2019.6,732.6 C2018.6,737.2 2015.2,740.6 2012.6,742.6Z" transform="rotate(0 2011 740.1)"/><path d="M2009.4,741.8 C2013,739 2016.6,735 2017.2,730 C2017.5,727.5 2017,725.4 2016,723.7 L2017.8,723.3 C2019.5,726 2020.2,729.4 2019.6,732.6 C2018.6,737.2 2015.2,740.6 2012.6,742.6Z" transform="rotate(120 2011 740.1)"/><path d="M2009.4,741.8 C2013,739 2016.6,735 2017.2,730 C2017.5,727.5 2017,725.4 2016,723.7 L2017.8,723.3 C2019.5,726 2020.2,729.4 2019.6,732.6 C2018.6,737.2 2015.2,740.6 2012.6,742.6Z" transform="rotate(240 2011 740.1)"/><circle cx="2011" cy="740.1" r="2.2"/></g><text x="2011" y="828.6" font-family="Liberation Serif" font-style="italic" font-weight="bold" font-size="29.5" fill="#646464" text-anchor="middle" letter-spacing="0">fx</text><rect x="1994" y="887.2" width="34" height="33.6" fill="none" stroke="#5e5e5e" stroke-width="1.8"/><circle cx="2011" cy="897.5" r="4.9" fill="#686868"/><circle cx="2004.6" cy="910.6" r="4.8" fill="#484848"/><circle cx="2017.6" cy="910.6" r="4.9" fill="#777"/><text x="2011" y="992" font-family="Liberation Serif" font-style="italic" font-weight="bold" font-size="57" fill="#6a6a6a" text-anchor="middle">a</text><text x="2011.2" y="1013.9" font-size="15.8" fill="#bababa" text-anchor="middle" letter-spacing="1.15">12pt</text><rect x="1992.4" y="1055.4" width="37.5" height="37" fill="none" stroke="#6a6a6a" stroke-width="1.1" stroke-dasharray="4.6 2.6"/><rect x="1991.9" y="1075" width="18.4" height="18" fill="#6e6e6e"/><path d="M2006.2,1071.7 H2013.4 V1078.7" fill="none" stroke="#7a7a7a" stroke-width="1.5"/><g transform="rotate(0 2011 1155.9)"><path d="M2011,1133.9 L2015.6,1149.5 L2006.4,1149.5 Z" fill="none" stroke="#5e5e5e" stroke-width="1"/><path d="M2011,1133.9 L2006.4,1149.5 L2011,1149.5 Z" fill="#5e5e5e"/></g><g transform="rotate(90 2011 1155.9)"><path d="M2011,1134.5 L2015.6,1149.5 L2006.4,1149.5 Z" fill="none" stroke="#5e5e5e" stroke-width="1"/><path d="M2011,1134.5 L2006.4,1149.5 L2011,1149.5 Z" fill="#5e5e5e"/></g><g transform="rotate(180 2011 1155.9)"><path d="M2011,1133.9 L2015.6,1149.5 L2006.4,1149.5 Z" fill="none" stroke="#5e5e5e" stroke-width="1"/><path d="M2011,1133.9 L2006.4,1149.5 L2011,1149.5 Z" fill="#5e5e5e"/></g><g transform="rotate(270 2011 1155.9)"><path d="M2011,1134.5 L2015.6,1149.5 L2006.4,1149.5 Z" fill="none" stroke="#5e5e5e" stroke-width="1"/><path d="M2011,1134.5 L2006.4,1149.5 L2011,1149.5 Z" fill="#5e5e5e"/></g><path d="M2011,1142.7 l-2.6,3.4 h5.2Z" fill="#5a5a5a" transform="rotate(45 2011 1155.9)"/><path d="M2011,1142.7 l-2.6,3.4 h5.2Z" fill="#5a5a5a" transform="rotate(135 2011 1155.9)"/><path d="M2011,1142.7 l-2.6,3.4 h5.2Z" fill="#5a5a5a" transform="rotate(225 2011 1155.9)"/><path d="M2011,1142.7 l-2.6,3.4 h5.2Z" fill="#5a5a5a" transform="rotate(315 2011 1155.9)"/><circle cx="2011" cy="1155.9" r="6" fill="#222"/><circle cx="2011" cy="1155.9" r="2.7" fill="#686868"/><circle cx="2011" cy="1237.6" r="16.8" fill="none" stroke="#5e5e5e" stroke-width="1.8"/><path d="M2008,1225.4 A12.4,12.4 0 0 0 2006.4,1249.2" fill="none" stroke="#5e5e5e" stroke-width="1.4" stroke-dasharray="3.4 2.2"/><path d="M2011,1225.6 V1237.6 H2019" fill="none" stroke="#646464" stroke-width="1.8"/><circle cx="2011" cy="1237.6" r="2.5" fill="#646464"/><text x="2011.2" y="2689" font-size="35.5" font-weight="bold" fill="#fafafa" text-anchor="middle">?</text></svg></div>
<div class="abs" style="left:1974px;top:0;width:2px;height:2732px;background:#0c0c0c"></div>
<div id="bottombar" class="abs" style=""><div class="abs" style="left:57.89999999999998px;top:11px;width:98px;height:98px;border-radius:49px;background:#2e2e2e"></div><div class="abs blabel" style="left:-13.100000000000023px">Add To Selection</div><div class="abs" style="left:247px;top:11px;width:98px;height:98px;border-radius:49px;background:#2e2e2e"></div><div class="abs blabel" style="left:176px">Select Under</div><div class="abs" style="left:413.6px;top:11px;width:98px;height:98px;border-radius:49px;background:#2e2e2e"></div><div class="abs blabel" style="left:342.6px">Select Inside</div><div class="abs" style="left:587.4000000000001px;top:11px;width:98px;height:98px;border-radius:49px;background:#2e2e2e"></div><div class="abs blabel" style="left:516.4000000000001px">About Center</div><div class="abs" style="left:547.1px;top:8px;width:1.8px;height:144px;background:#353535"></div><div class="abs" style="left:724.4px;top:8px;width:1.8px;height:144px;background:#353535"></div><div class="abs" style="left:731px;top:7px;width:64px;height:64px;border-radius:32px;background:#2e2e2e"></div><div class="abs" style="left:731px;top:76.80000000000018px;width:64px;height:64px;border-radius:32px;background:#2e2e2e"></div><div class="abs" style="left:801px;top:7px;width:64px;height:64px;border-radius:32px;background:#2e2e2e"></div><div class="abs" style="left:801px;top:76.80000000000018px;width:64px;height:64px;border-radius:32px;background:#2e2e2e"></div><div class="abs" style="left:871.2px;top:7px;width:64px;height:64px;border-radius:32px;background:#2e2e2e"></div><div class="abs" style="left:871.2px;top:76.80000000000018px;width:64px;height:64px;border-radius:32px;background:#2e2e2e"></div><svg class="abs" style="left:0;top:0" width="940" height="160" viewBox="554 2532 940 160"><path d="M648.9,2591.9 h24 M660.9,2579.9 v24" stroke="#7d7d7d" stroke-width="2.2" fill="none"/><rect x="846.2" y="2587.6" width="21" height="21" fill="#d6d6d6"/><circle cx="846.2" cy="2587.6" r="15.6" fill="#2e2e2e"/><circle cx="846.2" cy="2587.6" r="12.2" fill="#828282"/><circle cx="1016.8" cy="2592" r="16.6" fill="#828282"/><path d="M1015.4,2590.6 H1033.4 A16.6,16.6 0 0 1 1015.4,2608.6Z" fill="#2e2e2e"/><path d="M1018.4,2593.6 H1033.2 A16.6,16.6 0 0 1 1018.4,2608.4Z" fill="#d6d6d6"/><rect x="1173.2" y="2574.8" width="34.4" height="34.4" fill="none" stroke="#3d85d8" stroke-width="2"/><rect x="1181" y="2582.6" width="18.8" height="18.8" fill="none" stroke="#2f6db8" stroke-width="1.5"/><path d="M1177.6,2579.2 L1203.2,2604.8 M1203.2,2579.2 L1177.6,2604.8" stroke="#777" stroke-width="1.3"/><path d="M1177,2578.6 h4.4 M1177,2578.6 v4.4 M1203.8,2578.6 h-4.4 M1203.8,2578.6 v4.4 M1177,2605.4 h4.4 M1177,2605.4 v-4.4 M1203.8,2605.4 h-4.4 M1203.8,2605.4 v-4.4" stroke="#777" stroke-width="1.3"/><path d="M1187.4,2592 h6 M1190.4,2589 v6" stroke="#999" stroke-width="1.3"/><circle cx="1173.2" cy="2574.8" r="2.8" fill="#fff" stroke="#3d85d8" stroke-width="1.2"/><circle cx="1207.6" cy="2574.8" r="2.8" fill="#fff" stroke="#3d85d8" stroke-width="1.2"/><circle cx="1173.2" cy="2609.2" r="2.8" fill="#fff" stroke="#3d85d8" stroke-width="1.2"/><circle cx="1207.6" cy="2609.2" r="2.8" fill="#fff" stroke="#3d85d8" stroke-width="1.2"/><path d="M1303.4,2562.6 V2557.6 H1308.6 M1325.4,2557.6 H1330.6 V2562.6 M1303.4,2579.4 V2584.4 H1308.6 M1325.4,2584.4 H1330.6 V2579.4" fill="none" stroke="#7d7d7d" stroke-width="1.5"/><path d="M1310.4,2571.4 a7.4,7.4 0 0 1 10.6,-5.4 M1323.6,2570.6 a7.4,7.4 0 0 1 -10.6,5.4" fill="none" stroke="#7d7d7d" stroke-width="1.6"/><path d="M1318.4,2562.4 l4.6,1.6 l-3.2,3.4Z M1315.6,2579.6 l-4.6,-1.6 l3.2,-3.4Z" fill="#7d7d7d"/><path d="M1317,2568.4 l2.6,2.6 l-2.6,2.6 l-2.6,-2.6Z" fill="#7d7d7d"/><circle cx="1387" cy="2571" r="9.4" fill="none" stroke="#7d7d7d" stroke-width="1.6"/><path d="M1373,2571 h28 M1387,2557 v28" stroke="#7d7d7d" stroke-width="1.6"/><rect x="1446.4" y="2561" width="21.6" height="20" fill="none" stroke="#666" stroke-width="1.4"/><circle cx="1446.4" cy="2561" r="2.2" fill="#6e6e6e"/><circle cx="1468.0" cy="2561" r="2.2" fill="#6e6e6e"/><circle cx="1446.4" cy="2581" r="2.2" fill="#6e6e6e"/><circle cx="1468.0" cy="2581" r="2.2" fill="#6e6e6e"/><path d="M1457.2,2564.5 v13" stroke="#d8d8d8" stroke-width="1.6"/><path d="M1449.2,2567 v8 l5.6,-4Z M1465.2,2567 v8 l-5.6,-4Z" fill="#d0d0d0"/><rect x="1303" y="2626.8" width="28" height="28" fill="none" stroke="#7d7d7d" stroke-width="1.6"/><rect x="1307.5" y="2631.3" width="19" height="19" fill="none" stroke="#7d7d7d" stroke-width="1.4" stroke-dasharray="4 2.4"/><circle cx="1303" cy="2626.8" r="2.2" fill="#7d7d7d"/><circle cx="1331" cy="2626.8" r="2.2" fill="#7d7d7d"/><circle cx="1303" cy="2654.8" r="2.2" fill="#7d7d7d"/><circle cx="1331" cy="2654.8" r="2.2" fill="#7d7d7d"/><rect x="1312.2" y="2640.2000000000003" width="9.6" height="7" fill="#8a8a8a"/><path d="M1314.3,2640.4 v-2.2 a2.7,2.7 0 0 1 5.4,0 v2.2" fill="none" stroke="#8a8a8a" stroke-width="1.5"/><rect x="1373" y="2626.8" width="28" height="28" fill="none" stroke="#7d7d7d" stroke-width="1.6"/><circle cx="1373" cy="2626.8" r="2.2" fill="#7d7d7d"/><circle cx="1401" cy="2626.8" r="2.2" fill="#7d7d7d"/><circle cx="1373" cy="2654.8" r="2.2" fill="#7d7d7d"/><circle cx="1401" cy="2654.8" r="2.2" fill="#7d7d7d"/><path d="M1378,2640.8 c4,-6.4 14,-6.4 18,0 c-4,6.4 -14,6.4 -18,0Z" fill="#8a8a8a"/><circle cx="1387" cy="2640.8" r="3.4" fill="#2e2e2e"/><circle cx="1387" cy="2640.8" r="1.5" fill="#9a9a9a"/><path d="M1455.6000000000001,2631.4 h8 v8 M1459.6000000000001,2627.6000000000004 h8.4 v8.4" fill="none" stroke="#8a8a8a" stroke-width="1.3"/><rect x="1447.2" y="2636.8" width="12.4" height="12.4" fill="none" stroke="#e8e8e8" stroke-width="1.3" stroke-dasharray="2.2 1.8"/><circle cx="1447.2" cy="2636.8" r="1.5" fill="#f0f0f0"/><circle cx="1459.6000000000001" cy="2636.8" r="1.5" fill="#f0f0f0"/><circle cx="1447.2" cy="2649.2000000000003" r="1.5" fill="#f0f0f0"/><circle cx="1459.6000000000001" cy="2649.2000000000003" r="1.5" fill="#f0f0f0"/><circle cx="1453.4" cy="2649.2000000000003" r="1.5" fill="#f0f0f0"/><circle cx="1453.4" cy="2636.8" r="1.5" fill="#f0f0f0"/><circle cx="1453.4" cy="2632.2000000000003" r="1.7" fill="none" stroke="#f0f0f0" stroke-width="1"/></svg></div>
<svg class="abs" style="left:1510px;top:2590px" width="40" height="40" viewBox="1510 2590 40 40"><path d="M1519.4,2598.8 L1538.4,2610 L1519.4,2621.2Z" fill="#e9e9e9" stroke="#000" stroke-width="2.2" stroke-linejoin="round"/></svg>
<div id="homeind" class="abs" style=""></div>
</body></html>
